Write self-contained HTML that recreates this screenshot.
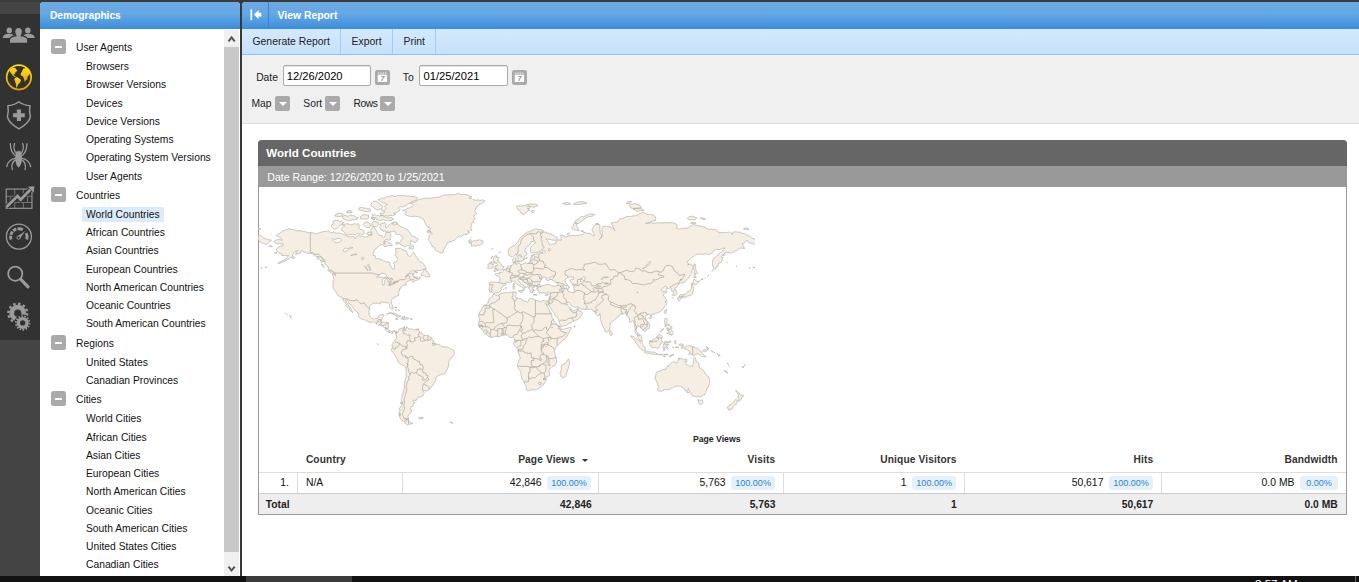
<!DOCTYPE html>
<html lang="en">
<head>
<meta charset="utf-8">
<title>View Report - World Countries</title>
<style>
*{box-sizing:border-box;margin:0;padding:0}
html,body{width:1359px;height:582px;overflow:hidden;background:#444;font-family:"Liberation Sans",Arial,sans-serif;font-size:10px;color:#111}
.abs{position:absolute}
#topbar{position:absolute;left:0;top:0;width:1359px;height:2px;background:#3a3a3a}
#side{position:absolute;left:0;top:0;width:40px;height:576px;background:#444}
#sidedark{position:absolute;left:0;top:14px;width:40px;height:326px;background:#323232}
#gap{position:absolute;left:240px;top:0;width:2px;height:576px;background:#383838}
#taskbar{position:absolute;left:0;top:576px;width:1359px;height:6px;background:#121212;overflow:hidden}
#taskbar .act{position:absolute;left:246px;top:0;width:106px;height:6px;background:#3b3b3b}
#taskbar .clk{position:absolute;left:1255px;top:1px;font-size:11.6px;line-height:13px;color:#fff;white-space:nowrap}
#taskbar .sep{position:absolute;left:1355px;top:0;width:1px;height:6px;background:#666}
/* left panel */
#lp{position:absolute;left:40px;top:2px;width:200px;height:574px;background:#fff;border-radius:4px 4px 0 0;overflow:hidden}
.hdr{position:absolute;left:0;top:0;right:0;height:27px;background:linear-gradient(#69aae5 0%,#66a7e4 45%,#4a97df 80%,#3a8cdb 100%);color:#fff;font-weight:bold;font-size:10.2px;line-height:27px;white-space:nowrap}
#lp .hdr span{position:absolute;left:10px;top:0px}
#tree{position:absolute;left:40px;top:0;width:184px;height:576px;overflow:hidden}
.tp,.tc{position:absolute;white-space:nowrap;font-size:10.3px;line-height:13px;height:13px;color:#111}
.tp{left:36px}
.tc{left:46px}
.mn{position:absolute;left:-25px;top:-1.5px;width:15px;height:15px;border-radius:2.5px;background:#aaa}
.mn:after{content:"";position:absolute;left:4px;top:6.3px;width:7px;height:2.3px;background:#fff;border-radius:.5px}
.sel span{position:absolute;left:-4px;top:-1px;padding:1px 4px 1px 4px;height:15px;line-height:13px;background:#dcebfc;border-radius:2px}
#sb{position:absolute;left:224px;top:30px;width:15px;height:546px;background:#f0f0f0}
#sb .th{position:absolute;left:0;top:17px;width:15px;height:505px;background:#c8c8c8}
/* main panel */
#mp{position:absolute;left:242px;top:2px;width:1117px;height:574px;background:#fff;border-radius:4px 0 0 0;overflow:hidden}
#mpi{position:absolute;left:1px;top:0;width:1116px;height:574px}
#mpi>.hdr,#mpi>#tb,#mpi>#flt{left:-1px;width:1117px}
#mpi>.hdr>*,#mpi>#tb>*,#mpi>#flt>*{margin-left:1px}
#mp .hdr .col{position:absolute;left:0;top:0;width:26px;height:27px;border-right:1px solid #3783d6}
#mp .hdr .t{position:absolute;left:34.5px;top:0px;font-size:10.4px}
#tb{position:absolute;left:0;top:27px;width:1116px;height:26px;background:linear-gradient(#d4e9fc,#c6e1fa);border-bottom:1px solid #8ec3f4;font-size:10.4px;color:#222}
#tb div{position:absolute;top:0;height:25px;line-height:25.2px;border-right:1px solid #9fcdf6;text-align:left;white-space:nowrap}
#flt{position:absolute;left:0;top:53px;width:1116px;height:69px;background:#f0f0f0;border-bottom:1px solid #dcdcdc}
#flt .lb{position:absolute;font-size:10.3px;line-height:13px;color:#222;white-space:nowrap}
.inp{position:absolute;top:10px;width:88px;height:21px;border:1px solid #aaa;border-radius:2px;background:#fff;font-size:11.15px;line-height:21px;padding-left:2.8px;color:#000;box-shadow:inset 0 1px 1px #e4e4e4}
.cal{position:absolute;top:15px;width:15px;height:15px}
.dd{position:absolute;top:41px;width:15px;height:15px;border-radius:2px;background:#aaa}
.dd:after{content:"";position:absolute;left:3.5px;top:5.5px;border:4px solid transparent;border-top:4.5px solid #fff;border-bottom:0}
/* report */
#rep{position:absolute;left:15px;top:138px;width:1089px;height:375px;border:1px solid #999;border-top:0;border-radius:4px 4px 0 0;background:#fff}
#rep .ti{position:absolute;left:-1px;top:0;width:1089px;height:26px;background:#666;border-radius:4px 4px 0 0;color:#fff;font-weight:bold;font-size:11.6px;line-height:26px}
#rep .ti span{position:absolute;left:8.2px;top:0;white-space:nowrap}
#rep .su{position:absolute;left:-1px;top:26px;width:1089px;height:20.5px;background:#999;color:#fff;font-size:10.6px;line-height:20px}
#rep .su span{position:absolute;left:9.3px;top:0.5px;white-space:nowrap}

#tbl{position:absolute;left:0;top:0;width:1087px;height:374px}
#tbl span{position:absolute;white-space:nowrap;line-height:13px;height:13px}
#tbl .ax{font-weight:bold;font-size:8.7px;color:#222;line-height:11px}
#tbl .th{font-weight:bold;font-size:10.2px;color:#333;letter-spacing:0.12px}
#tbl .td{font-size:10.4px;color:#111}
#tbl .tt{font-weight:bold;font-size:10.3px;color:#222}
#tbl .bd{font-size:9.05px;color:#1f87d0;background:#e6f0f9;border-radius:3.5px;height:13.5px;line-height:15.3px;text-align:center;overflow:hidden}
#tbl .hl{position:absolute;left:0;width:1087px;height:1px;background:#ddd}
#tbl .vl{position:absolute;width:1px;height:20px;background:#ddd}
#tbl .tot{position:absolute;left:0;width:1087px;height:21px;background:#eee;border-top:1px solid #ccc}
#tbl .arr{position:absolute;border:3.2px solid transparent;border-top:3.6px solid #333;border-bottom:0}
</style>
</head>
<body>
<div id="side"></div>
<div id="sidedark"></div>
<div id="topbar"></div>
<div id="gap"></div>
<svg class="abs" style="left:0;top:0" width="40" height="340" viewBox="0 0 40 340">
<defs><linearGradient id="gy" x1="0" y1="0" x2="0" y2="1"><stop offset="0" stop-color="#f9dc1e"/><stop offset="0.5" stop-color="#f3c40f"/><stop offset="1" stop-color="#e6a200"/></linearGradient></defs>
<g transform="translate(0,14) scale(0.06873)"><g fill="#9b9b9b">
<ellipse cx="135" cy="240" rx="40" ry="44"/><path d="M40 350 Q42 305 100 292 L165 292 Q200 300 205 320 L150 350 Z"/>
<ellipse cx="405" cy="240" rx="40" ry="44"/><path d="M505 350 Q503 305 445 292 L380 292 Q345 300 340 320 L395 350 Z"/>
<g stroke="#323232" stroke-width="16"><ellipse cx="270" cy="258" rx="56" ry="62"/><path d="M137 428 L137 375 Q145 330 215 318 L325 318 Q395 330 403 375 L403 428 Z"/></g>
<rect x="240" y="290" width="60" height="50"/>
</g></g>
<g transform="translate(0,56) scale(0.06873)"><circle cx="275" cy="310" r="178" fill="none" stroke="url(#gy)" stroke-width="25"/>
<g fill="url(#gy)">
<path d="M140 205 L170 180 L205 168 L228 182 L252 215 L226 236 L218 262 L196 270 L214 290 L238 300 L214 307 L186 286 L160 250 L146 228 Z"/>
<path d="M213 322 L246 304 L286 330 L306 350 L292 386 L266 416 L247 456 L234 462 L232 410 L220 370 L210 342 Z"/>
<path d="M340 182 L380 174 L420 198 L442 240 L424 276 L402 300 L396 340 L376 352 L360 378 L350 340 L336 300 L310 286 L298 262 L320 226 L330 200 Z"/>
</g></g>
<g transform="translate(0,96) scale(0.06873)"><path d="M275 84 Q205 136 114 140 Q130 215 108 300 Q122 392 275 480 Q428 392 442 300 Q420 215 436 140 Q345 136 275 84 Z" fill="none" stroke="#9b9b9b" stroke-width="21" stroke-linejoin="round"/>
<path d="M245 195 H305 V250 H360 V310 H305 V365 H245 V310 H190 V250 H245 Z" fill="#9b9b9b"/></g>
<g transform="translate(0,136) scale(0.06873)"><g fill="none" stroke="#9b9b9b" stroke-width="19" stroke-linecap="round">
<path d="M240 295 Q150 250 150 110"/><path d="M300 295 Q392 250 392 110"/>
<path d="M250 272 Q180 200 212 110"/><path d="M292 272 Q362 200 330 110"/>
<path d="M232 322 Q120 340 98 445"/><path d="M310 322 Q422 340 446 445"/>
<path d="M236 340 Q150 390 180 490"/><path d="M306 340 Q392 390 364 490"/>
</g>
<path d="M238 215 L250 232 L262 208 L270 225 L280 208 L292 232 L304 215 L310 262 Q322 290 318 360 Q312 420 270 462 Q230 420 224 360 Q220 290 232 262 Z" fill="#9b9b9b"/></g>
<g transform="translate(0,176) scale(0.06873)"><g fill="none" stroke="#7a7a7a" stroke-width="14">
<path d="M90 295 H465 M90 385 H465 M215 190 V295 M340 190 V295 M150 295 V385 M280 295 V385 M400 295 V385 M215 385 V470 M340 385 V470"/></g>
<rect x="90" y="190" width="375" height="280" fill="none" stroke="#9b9b9b" stroke-width="16"/>
<path d="M95 450 L255 290 L300 345 L448 192" fill="none" stroke="#323232" stroke-width="70"/>
<path d="M95 450 L255 290 L300 345 L440 200" fill="none" stroke="#9b9b9b" stroke-width="40"/>
<path d="M500 148 L405 158 L490 243 Z" fill="#9b9b9b"/></g>
<g transform="translate(0,216) scale(0.06873)"><circle cx="275" cy="300" r="182" fill="none" stroke="#9b9b9b" stroke-width="19"/>
<path d="M161 342 A120 120 0 0 1 156 288 M159 274 A120 120 0 0 1 183 228 M193 217 A120 120 0 0 1 238 191 M254 187 A120 120 0 0 1 331 199 M381 249 A120 120 0 0 1 389 342" fill="none" stroke="#9b9b9b" stroke-width="42"/>
<path d="M385 200 L250 295 L292 335 Z" fill="#9b9b9b" stroke="#323232" stroke-width="10"/>
<circle cx="270" cy="315" r="24" fill="#323232" stroke="#9b9b9b" stroke-width="14"/></g>
<g transform="translate(0,256) scale(0.06873)"><circle cx="222" cy="258" r="103" fill="none" stroke="#9b9b9b" stroke-width="25"/>
<path d="M300 338 L408 448" fill="none" stroke="#9b9b9b" stroke-width="46" stroke-linecap="round"/></g>
<g transform="translate(0,296) scale(0.06873)"><circle cx="258" cy="250" r="122" fill="#9b9b9b"/><circle cx="258" cy="250" r="137.0" fill="none" stroke="#9b9b9b" stroke-width="34" stroke-dasharray="35.9 35.9"/><circle cx="258" cy="250" r="52" fill="#323232"/><circle cx="330" cy="392" r="124" fill="#323232"/><circle cx="330" cy="392" r="88" fill="#9b9b9b"/><circle cx="330" cy="392" r="99.0" fill="none" stroke="#9b9b9b" stroke-width="26" stroke-dasharray="22.2 22.2"/><circle cx="330" cy="392" r="38" fill="#323232"/></g>
</svg>
<div id="lp">
  <div class="hdr"><span>Demographics</span></div>
</div>
<div id="tree">
<div class="tp" style="top:40.9px"><i class="mn"></i>User Agents</div>
<div class="tc" style="top:59.9px">Browsers</div>
<div class="tc" style="top:77.9px">Browser Versions</div>
<div class="tc" style="top:96.9px">Devices</div>
<div class="tc" style="top:114.9px">Device Versions</div>
<div class="tc" style="top:132.9px">Operating Systems</div>
<div class="tc" style="top:150.9px">Operating System Versions</div>
<div class="tc" style="top:169.9px">User Agents</div>
<div class="tp" style="top:188.9px"><i class="mn"></i>Countries</div>
<div class="tc sel" style="top:207.9px"><span>World Countries</span></div>
<div class="tc" style="top:225.9px">African Countries</div>
<div class="tc" style="top:243.9px">Asian Countries</div>
<div class="tc" style="top:262.9px">European Countries</div>
<div class="tc" style="top:280.9px">North American Countries</div>
<div class="tc" style="top:298.9px">Oceanic Countries</div>
<div class="tc" style="top:316.9px">South American Countries</div>
<div class="tp" style="top:336.9px"><i class="mn"></i>Regions</div>
<div class="tc" style="top:355.9px">United States</div>
<div class="tc" style="top:373.9px">Canadian Provinces</div>
<div class="tp" style="top:392.9px"><i class="mn"></i>Cities</div>
<div class="tc" style="top:411.9px">World Cities</div>
<div class="tc" style="top:430.9px">African Cities</div>
<div class="tc" style="top:448.9px">Asian Cities</div>
<div class="tc" style="top:466.9px">European Cities</div>
<div class="tc" style="top:484.9px">North American Cities</div>
<div class="tc" style="top:503.9px">Oceanic Cities</div>
<div class="tc" style="top:521.9px">South American Cities</div>
<div class="tc" style="top:539.9px">United States Cities</div>
<div class="tc" style="top:557.9px">Canadian Cities</div>

</div>
<div id="sb"><div class="th"></div>
<svg class="abs" style="left:0;top:0" width="15" height="546" viewBox="0 0 15 546"><path d="M4.5 11.3 L7.6 7.4 L10.7 11.3" fill="none" stroke="#505050" stroke-width="1.9"/><path d="M4.5 536.6 L7.6 540.5 L10.7 536.6" fill="none" stroke="#505050" stroke-width="1.9"/></svg>
</div>
<div id="mp"><div id="mpi">
  <div class="hdr"><div class="col"><svg class="abs" style="left:7px;top:7px" width="14" height="13" viewBox="0 0 14 13"><rect x="0.5" y="0.2" width="1.6" height="11" fill="#fff"/><path d="M3.9 5.6 L8.6 1.1 L8.6 3.7 L11.3 3.7 L11.3 7.5 L8.6 7.5 L8.6 10.1 Z" fill="#fff"/></svg></div><span class="t">View Report</span></div>
  <div id="tb">
    <div style="left:0;width:98px;padding-left:9.5px">Generate Report</div>
    <div style="left:98px;width:52px;padding-left:10.5px">Export</div>
    <div style="left:150px;width:43px;padding-left:10.5px">Print</div>
  </div>
  <div id="flt">
    <span class="lb" style="left:13.2px;top:15.5px">Date</span>
    <div class="inp" style="left:40px">12/26/2020</div>
    <div class="cal" style="left:132px"><svg width="15" height="15" viewBox="0 0 15 15"><rect width="15" height="15" rx="2.2" fill="#aaa"/><rect x="2.7" y="4.8" width="9.4" height="7.1" fill="#fff"/><path d="M2.9 3.5H12.1" stroke="#d4d4d4" stroke-width="2.4" stroke-dasharray="1.5 0.8"/><text x="7.5" y="10.7" font-family="Liberation Sans,Arial,sans-serif" font-size="6.6" font-weight="bold" font-style="italic" fill="#8c8c8c" text-anchor="middle">7</text></svg></div>
    <span class="lb" style="left:159.8px;top:15.5px">To</span>
    <div class="inp" style="left:176px;width:89px;padding-left:3.6px">01/25/2021</div>
    <div class="cal" style="left:268.7px"><svg width="15" height="15" viewBox="0 0 15 15"><rect width="15" height="15" rx="2.2" fill="#aaa"/><rect x="2.7" y="4.8" width="9.4" height="7.1" fill="#fff"/><path d="M2.9 3.5H12.1" stroke="#d4d4d4" stroke-width="2.4" stroke-dasharray="1.5 0.8"/><text x="7.5" y="10.7" font-family="Liberation Sans,Arial,sans-serif" font-size="6.6" font-weight="bold" font-style="italic" fill="#8c8c8c" text-anchor="middle">7</text></svg></div>
    <span class="lb" style="left:8.4px;top:41.5px">Map</span><div class="dd" style="left:32px"></div>
    <span class="lb" style="left:60.3px;top:41.5px">Sort</span><div class="dd" style="left:82px"></div>
    <span class="lb" style="left:110.4px;top:41.5px;letter-spacing:-0.45px">Rows</span><div class="dd" style="left:137px"></div>
  </div>
  <div id="rep">
    <div class="ti"><span>World Countries</span></div>
    <div class="su"><span>Date Range: 12/26/2020 to 1/25/2021</span></div>
<svg class="abs" style="left:-1px;top:47px" width="498" height="242" viewBox="258 187 498 242">
<defs><clipPath id="mc"><rect x="258.5" y="187" width="496.5" height="242"/></clipPath></defs>
<g clip-path="url(#mc)" stroke="#aeaba5" stroke-width="0.65" stroke-linejoin="round">
<path fill="#f6eee2" d="M493.5 294.0L494.3 293.9L495.4 294.9L496.4 295.3L497.4 294.8L498.5 295.1L500.1 294.2L501.9 293.4L503.5 293.0L504.7 292.8L505.6 292.5L506.7 292.7L508.3 292.4L509.5 292.6L510.3 292.2L511.7 292.2L513.3 292.2L514.8 291.8L515.5 291.9L515.5 292.7L516.4 292.2L515.9 293.7L516.4 294.6L515.3 296.3L515.1 296.7L516.4 297.6L517.1 297.9L518.5 298.3L519.8 298.3L520.9 298.8L521.8 299.1L522.5 300.4L523.9 301.1L525.2 301.3L526.2 301.4L527.3 302.1L528.6 301.1L528.8 299.4L529.7 298.5L530.7 298.3L531.6 298.7L532.7 298.8L534.0 299.3L535.4 300.0L536.6 300.7L538.1 300.7L539.4 301.2L540.8 301.3L541.7 301.1L542.9 300.5L544.2 300.4L545.6 301.0L546.9 301.0L547.9 300.7L548.1 302.1L548.8 303.3L548.1 305.1L547.9 305.7L547.1 305.0L546.4 304.0L545.7 302.6L545.6 303.3L546.2 305.1L547.3 306.6L548.1 307.5L548.3 308.5L549.2 309.6L549.6 311.0L550.0 312.4L551.1 312.9L551.5 313.8L551.9 315.2L551.6 316.2L551.9 317.2L552.4 318.3L553.7 319.3L554.0 320.8L554.8 322.3L556.0 323.5L556.9 324.3L557.8 325.3L558.3 326.0L559.4 326.5L560.2 327.0L559.9 328.0L561.2 329.3L562.2 329.3L563.2 329.2L564.1 329.0L565.2 328.5L566.6 328.3L567.9 328.3L568.9 327.6L570.4 327.5L571.1 327.6L570.8 329.3L570.1 330.3L569.6 331.3L569.0 332.5L568.6 333.3L567.8 334.7L567.3 336.0L566.8 336.8L565.9 337.7L564.9 338.8L563.9 339.5L562.9 340.2L561.8 341.2L561.0 342.5L559.5 343.2L558.5 344.1L557.9 345.3L556.4 346.6L555.7 347.6L555.5 348.5L554.7 349.8L554.1 351.5L555.1 352.4L554.7 353.4L554.8 354.4L555.3 355.1L555.5 356.4L556.4 357.2L556.3 358.6L556.4 359.7L556.7 360.9L556.6 362.4L556.0 363.5L556.0 364.4L554.8 365.1L554.1 366.0L552.8 366.2L551.7 367.1L550.5 368.0L549.6 369.2L548.6 370.5L549.4 371.5L549.4 372.6L549.6 373.7L549.6 375.1L548.3 376.5L547.2 376.7L546.2 377.2L546.0 378.9L546.1 380.1L545.7 381.3L545.1 382.3L544.2 383.0L543.9 384.1L542.9 385.0L541.8 385.9L540.8 387.2L539.8 387.6L538.8 388.8L537.4 388.9L536.5 389.7L535.1 390.0L534.0 389.8L532.5 389.7L531.3 390.0L530.1 390.1L528.6 390.9L527.0 390.1L526.3 388.9L526.1 387.7L526.2 386.7L525.3 385.8L525.2 384.6L524.4 383.5L524.3 382.4L523.4 381.5L522.9 380.3L522.1 379.3L521.8 378.2L521.4 376.9L521.2 375.4L520.7 374.4L521.0 373.0L520.6 371.5L519.8 370.5L518.9 369.0L518.2 367.8L517.6 366.9L517.5 365.8L517.5 364.7L517.6 363.7L518.4 362.7L518.7 361.1L519.0 360.0L520.1 359.0L520.2 357.2L519.8 356.3L519.4 355.3L518.9 353.8L518.3 352.4L518.0 351.1L518.0 349.8L516.7 348.3L515.8 347.5L515.1 346.6L514.1 344.9L513.7 343.2L514.4 341.9L514.8 340.3L514.7 338.6L513.6 337.3L511.7 337.4L509.9 337.5L509.0 336.4L508.0 335.7L507.3 335.0L506.2 334.8L505.3 334.9L504.0 335.1L503.1 335.3L501.5 335.7L500.3 336.0L499.1 336.8L497.3 336.5L496.0 336.2L494.7 336.4L493.2 337.1L491.3 337.4L490.2 337.2L489.3 336.6L488.1 336.1L487.3 335.0L485.9 334.1L484.6 333.3L483.6 331.9L482.9 330.5L481.6 329.2L480.9 328.4L480.2 327.5L479.1 327.0L478.7 325.7L479.0 324.7L477.8 323.7L478.6 323.1L479.1 322.0L479.0 320.9L479.5 320.0L479.7 319.0L479.7 317.9L479.1 317.2L478.5 316.1L478.4 315.2L479.0 314.3L479.4 313.1L480.1 311.3L481.0 310.5L481.4 309.6L482.0 308.0L483.1 307.0L483.6 305.8L484.7 305.0L485.9 305.0L486.9 304.3L487.9 303.4L488.3 302.0L488.2 300.5L489.0 299.8L489.3 298.6L490.5 297.8L491.3 297.3L492.3 296.6L493.1 295.2ZM655.0 378.4L655.2 377.4L655.5 376.1L656.0 374.6L655.8 373.3L656.4 372.3L657.7 371.7L658.8 371.1L659.9 371.2L660.8 370.8L661.9 370.0L662.9 369.8L664.0 369.3L665.6 369.3L666.2 368.1L667.3 367.1L667.2 365.8L669.0 366.2L669.4 364.7L671.0 363.6L671.7 363.0L672.4 362.0L673.7 361.6L674.7 362.0L675.3 362.8L677.1 362.9L677.4 361.5L678.1 360.9L678.5 359.7L679.8 359.3L681.2 358.4L682.5 358.8L683.5 359.4L684.8 359.3L685.8 359.5L686.9 359.0L687.0 360.1L685.9 360.8L685.2 361.9L685.2 362.8L686.6 364.1L687.5 365.1L688.6 365.4L689.6 366.3L690.7 366.4L692.4 366.4L692.5 365.3L693.2 364.4L693.3 363.1L693.5 361.7L693.6 360.7L693.6 359.7L693.8 358.8L694.3 357.7L695.1 357.5L695.6 358.5L696.1 359.7L696.0 360.8L696.5 362.1L697.6 362.2L698.5 362.9L699.0 363.9L698.8 365.1L699.2 366.9L699.7 368.2L700.7 368.6L701.9 369.3L702.7 369.8L703.5 370.5L704.2 371.8L704.6 373.0L706.0 373.7L706.9 375.4L708.0 376.1L709.0 377.0L709.0 378.3L709.4 379.6L709.5 380.7L709.8 382.0L709.4 383.5L709.0 385.0L708.3 386.1L708.4 387.2L707.3 387.8L706.9 388.6L706.9 390.0L706.0 391.2L705.7 392.6L704.9 393.9L704.8 394.9L703.3 395.0L702.2 395.5L701.5 396.5L700.2 397.2L699.2 396.9L698.1 396.1L696.5 396.9L695.3 396.5L693.8 396.1L692.0 395.7L691.7 394.3L690.8 393.4L690.0 392.1L689.0 391.2L689.0 389.8L688.6 388.5L688.0 389.7L687.3 391.5L686.2 390.7L685.2 390.9L684.9 390.1L684.6 388.9L683.2 387.9L682.0 387.3L681.2 386.7L680.2 386.1L679.1 386.2L677.9 386.1L676.4 386.3L674.8 386.4L673.7 387.2L672.4 387.9L671.0 388.2L669.6 389.5L668.1 389.8L666.9 389.7L665.4 389.9L664.2 389.7L663.1 390.1L662.2 391.2L661.3 391.0L660.2 391.3L659.2 391.0L658.1 390.3L657.4 389.1L658.4 387.5L658.2 386.3L658.1 385.3L657.4 383.6L656.8 381.7L656.0 380.9L655.8 379.8ZM5.7 293.7L4.8 292.8L3.3 291.9L2.4 292.2L1.3 292.2L1.5 291.2L1.4 290.1L0.5 289.7L0.9 288.6L1.3 287.3L1.5 285.8L1.3 284.2L0.7 282.9L1.8 282.6L2.5 281.8L3.9 282.3L5.5 282.0L6.8 282.1L8.2 282.3L9.5 282.5L10.9 282.3L11.0 281.4L11.7 280.4L11.8 278.7L11.7 277.8L10.4 276.4L9.9 275.9L8.8 275.9L7.5 275.1L6.8 274.1L7.9 273.6L9.3 273.4L10.1 273.7L11.3 273.8L11.2 272.1L11.7 272.4L13.6 272.2L14.6 271.9L15.5 271.0L15.5 269.8L16.5 269.3L17.8 268.9L19.0 267.9L19.7 266.3L20.7 265.8L21.6 265.9L22.8 265.4L24.5 265.1L25.0 264.5L25.4 263.8L25.0 262.7L24.6 261.6L24.3 259.8L25.0 258.6L26.5 258.2L27.7 257.5L28.0 258.5L27.4 259.8L28.1 260.1L27.1 260.6L26.6 261.6L26.4 262.7L26.9 263.6L28.3 263.6L28.1 264.5L29.3 263.9L30.3 263.6L31.6 263.4L32.6 264.5L33.9 264.5L35.0 263.8L36.6 263.0L38.2 262.9L38.8 263.6L40.2 263.6L40.5 262.7L41.8 262.0L42.1 260.4L41.8 259.2L42.6 257.9L44.0 257.5L44.8 258.6L46.4 258.4L46.0 257.4L46.4 256.4L45.2 255.4L45.2 254.6L46.3 254.4L47.2 254.0L48.7 253.7L50.1 254.0L51.3 254.0L52.7 253.2L54.3 253.2L53.4 252.5L52.1 252.1L50.2 252.2L48.6 252.3L47.2 252.5L45.7 252.7L44.5 253.2L43.6 252.9L42.5 252.1L42.2 251.0L42.4 250.1L42.3 248.9L42.2 248.0L43.2 246.4L44.4 245.4L45.5 244.4L46.6 243.2L47.8 242.6L46.8 241.8L46.2 241.1L44.6 241.4L43.2 241.5L43.0 242.8L42.4 243.9L41.5 245.1L40.5 245.8L39.2 246.4L38.4 247.4L38.0 248.4L36.9 249.1L36.7 250.5L36.7 251.7L37.5 252.1L38.7 252.7L39.0 253.8L38.4 254.9L37.5 255.4L36.9 256.4L36.0 256.9L35.7 258.0L35.6 259.4L34.8 260.5L33.8 261.1L32.7 261.1L32.6 261.8L31.0 261.8L30.7 260.3L30.1 259.5L29.6 258.3L29.1 256.5L28.4 254.8L27.7 253.8L27.3 255.0L26.2 255.7L25.5 256.4L24.4 256.6L23.0 256.9L22.2 255.9L20.9 255.4L20.9 254.0L20.3 253.1L20.1 251.1L20.1 249.9L20.4 249.1L21.0 248.3L22.2 247.6L23.5 246.5L24.9 246.0L26.0 245.8L26.9 244.9L27.9 244.0L28.7 243.0L29.7 241.9L30.3 240.7L31.0 239.5L31.6 238.5L32.3 237.6L33.4 236.7L34.4 235.6L35.5 234.9L36.4 234.0L37.9 233.3L39.1 232.1L41.1 231.8L42.5 231.2L43.7 230.4L45.2 229.7L46.6 229.3L48.3 229.0L49.6 229.5L51.3 229.3L52.8 229.4L54.0 230.2L55.4 230.9L54.2 231.5L53.3 232.1L54.8 232.1L56.1 232.1L57.7 232.2L58.8 233.0L60.3 233.2L61.3 233.9L62.8 234.0L64.4 235.1L66.2 235.8L67.4 236.8L68.9 237.4L69.0 238.5L69.2 239.6L68.2 240.1L66.9 240.4L65.4 240.2L63.5 240.0L61.8 239.4L60.1 239.4L59.1 238.9L58.1 239.1L59.0 240.5L60.1 241.7L60.7 242.7L60.8 243.9L62.1 244.4L63.5 245.1L64.9 243.9L66.4 243.8L68.0 243.7L67.6 241.7L69.0 240.9L70.3 239.8L71.7 240.1L73.0 240.2L72.8 238.6L73.3 237.4L72.6 236.4L72.3 235.1L74.2 235.3L75.7 235.6L76.4 236.9L77.5 237.1L78.4 236.9L79.8 236.1L81.1 235.8L82.6 235.7L84.5 235.3L85.9 235.1L87.2 235.8L88.4 235.4L90.0 235.3L91.3 234.9L93.2 234.9L94.7 234.4L95.6 233.5L96.1 232.3L97.8 232.7L99.2 233.2L100.8 233.3L102.0 233.4L102.8 234.0L104.2 235.1L105.6 235.2L106.9 234.9L105.5 233.5L104.9 232.1L104.4 230.6L103.8 229.3L104.6 227.9L105.1 226.9L106.2 225.6L107.4 224.8L108.3 223.8L110.0 224.4L111.6 224.8L111.8 226.5L111.6 228.5L111.6 230.2L112.0 231.4L112.1 232.8L113.0 234.5L113.4 236.2L112.8 237.6L112.1 238.9L111.0 240.0L112.0 238.6L113.7 237.4L113.8 235.7L114.4 234.0L114.0 232.2L113.8 231.0L113.7 229.3L114.4 227.6L115.0 226.1L116.9 226.2L118.4 226.8L119.8 226.1L120.8 226.7L121.8 226.8L123.3 227.6L124.6 228.2L125.9 229.3L126.6 230.9L126.2 229.2L125.2 227.3L124.5 226.0L123.7 224.6L122.9 223.1L124.8 222.7L126.2 222.2L128.4 222.1L130.0 221.8L130.4 220.5L131.3 219.2L133.2 218.6L135.1 218.2L136.7 217.4L138.5 216.6L140.5 216.5L142.2 216.3L143.8 216.4L145.6 215.8L147.3 215.7L148.9 215.2L150.2 214.1L151.9 213.7L153.6 212.8L154.8 211.9L155.9 212.6L157.1 213.4L158.4 214.1L159.8 214.6L161.7 214.2L163.1 214.8L164.5 214.6L165.7 215.6L167.2 216.8L167.6 218.6L167.2 220.5L165.7 220.7L163.9 221.1L162.5 221.8L160.6 222.3L158.8 223.3L157.1 223.8L158.5 223.2L160.1 223.0L161.6 223.1L163.2 222.6L164.6 223.2L166.0 223.2L167.2 223.1L168.7 222.8L170.5 222.9L171.8 222.9L173.3 222.8L175.4 223.1L177.2 222.3L178.9 223.0L180.8 222.6L182.6 222.6L184.2 222.7L185.6 223.1L187.2 223.7L188.9 224.6L188.9 226.3L188.3 228.0L189.6 228.2L191.0 229.3L192.2 228.9L193.7 228.0L195.6 228.4L197.2 228.0L199.1 228.3L200.3 227.3L201.8 226.6L202.9 225.6L204.5 224.8L206.4 224.9L207.8 225.2L209.5 225.6L211.3 225.8L213.0 226.4L215.1 226.8L216.7 226.8L217.4 228.3L219.4 228.5L220.8 229.5L222.6 229.1L224.6 229.7L226.2 229.3L227.6 229.8L229.1 230.9L230.3 231.6L230.3 232.6L232.1 232.8L233.7 232.6L235.5 232.5L237.1 232.8L238.4 232.4L239.7 232.3L241.1 231.9L242.6 233.0L244.5 234.0L243.9 234.4L244.3 233.2L245.2 231.9L247.0 231.8L248.4 231.9L250.2 232.1L252.0 232.3L253.8 233.3L255.8 233.6L257.4 234.2L258.6 235.0L260.0 235.5L261.5 236.2L262.8 237.1L263.6 238.1L264.9 238.5L266.5 239.0L268.3 239.6L269.9 239.8L271.4 240.4L270.7 241.3L269.6 241.7L268.5 242.3L267.6 243.5L266.6 244.3L264.8 244.0L263.5 243.5L261.8 242.9L260.1 242.0L259.2 240.9L258.6 240.0L257.5 241.2L256.7 242.2L256.1 243.2L255.4 243.7L254.0 243.5L254.4 244.9L255.4 246.0L255.9 247.4L256.3 248.5L254.7 248.4L253.4 248.0L251.6 248.5L250.0 249.5L248.4 250.5L246.6 251.1L245.2 252.0L244.3 253.1L242.5 253.1L241.4 252.6L239.8 252.5L238.0 252.6L236.4 253.2L235.9 254.4L234.8 255.0L234.0 256.2L233.0 256.9L234.6 257.3L234.4 258.5L234.0 259.8L233.6 261.2L232.6 262.5L231.5 263.1L230.3 263.4L230.3 264.6L230.2 265.8L228.4 266.3L228.0 268.1L226.7 268.6L225.8 269.8L225.3 268.6L225.1 267.0L224.4 265.2L224.3 263.4L224.3 262.2L224.5 260.7L225.1 259.1L226.0 257.9L227.2 257.1L228.0 256.5L228.8 255.6L230.0 254.6L231.4 253.2L232.9 252.3L233.9 251.3L234.9 249.9L236.0 249.0L236.7 248.0L234.8 248.0L233.4 248.8L232.0 249.4L230.7 249.5L228.9 249.7L227.3 249.6L225.8 250.1L225.3 251.6L224.6 252.5L223.5 253.4L222.1 253.7L220.8 254.8L219.3 254.3L218.1 254.0L216.6 253.9L214.7 254.4L213.3 254.4L211.9 254.0L210.6 254.2L209.1 254.5L207.5 254.4L206.6 255.6L205.4 256.5L203.9 257.3L202.7 258.1L201.9 258.9L200.7 259.9L199.7 261.2L199.4 262.9L200.1 263.7L201.1 264.0L200.4 264.5L199.4 265.1L201.0 264.4L202.5 264.0L203.6 265.2L204.9 265.8L204.8 267.5L204.1 268.9L203.9 270.5L203.8 272.3L203.6 273.9L202.1 275.2L201.1 276.8L200.4 278.2L199.2 278.9L198.4 279.7L197.4 281.0L196.7 282.0L195.4 282.7L194.0 283.3L192.3 282.6L190.7 283.7L189.6 285.3L189.2 286.4L188.2 287.5L186.9 287.8L186.2 288.7L187.5 290.0L187.9 291.0L188.7 292.2L188.9 293.7L188.5 294.9L187.6 295.0L186.5 295.5L184.7 296.0L184.7 294.2L185.3 292.4L184.9 291.3L183.1 290.7L183.1 289.7L183.2 288.3L181.9 287.6L180.7 288.5L179.2 288.6L177.8 289.5L178.1 288.2L179.0 286.9L177.4 286.2L176.4 286.6L175.7 287.8L174.2 288.2L173.3 289.0L172.9 290.0L174.4 291.2L175.0 291.9L176.1 291.4L177.0 291.0L178.1 291.1L179.4 291.6L178.4 292.6L177.4 292.8L176.5 293.7L175.6 294.1L175.1 295.2L175.5 296.1L176.5 296.7L177.1 297.5L177.4 298.5L178.5 300.1L178.6 301.3L177.6 301.9L176.7 302.1L178.5 302.7L178.4 303.8L178.2 304.7L177.0 305.7L176.2 306.7L175.8 308.2L174.8 308.9L174.2 309.9L173.3 310.6L172.5 311.3L171.6 312.0L170.1 312.3L168.6 313.1L167.2 313.5L166.4 314.1L165.2 314.2L164.2 314.2L163.2 314.9L162.9 316.1L162.2 314.6L160.5 314.2L159.1 314.8L158.0 315.6L157.4 316.6L156.8 317.7L157.6 318.4L157.8 319.6L158.3 320.7L159.4 321.3L160.2 321.9L160.6 323.1L161.4 324.0L161.5 325.1L161.6 326.3L161.4 327.6L160.9 328.5L159.8 328.8L158.4 329.5L158.0 330.5L157.1 331.4L156.0 331.7L155.4 330.3L155.0 329.5L153.7 329.2L152.9 327.8L151.7 326.7L150.2 326.4L149.6 325.3L148.8 326.4L148.4 328.0L147.9 329.6L148.3 330.9L149.2 332.1L149.8 333.7L151.1 334.2L152.1 335.0L153.0 335.6L153.6 336.6L153.6 337.9L153.7 339.5L154.1 340.6L154.6 341.4L153.6 341.5L152.7 340.8L151.9 340.3L150.7 339.3L149.9 337.9L149.5 336.1L149.2 334.8L148.4 334.0L147.0 332.7L146.6 331.3L147.0 330.3L147.0 329.3L146.7 328.4L146.9 327.4L146.5 326.5L146.4 325.3L146.2 324.3L145.8 323.3L145.6 322.3L145.7 321.3L144.6 320.6L143.5 321.2L142.7 322.3L141.2 322.0L141.2 321.1L141.5 320.0L141.2 318.2L140.1 316.8L139.0 315.9L138.4 314.8L138.0 313.4L136.1 313.1L134.7 314.1L132.9 314.1L131.3 314.6L131.0 315.9L130.5 316.7L128.9 317.2L128.2 318.3L127.2 318.9L126.3 320.2L124.9 320.9L123.4 322.1L122.1 323.1L122.3 324.4L122.0 325.3L122.0 326.7L121.5 328.0L121.5 329.6L120.5 330.9L119.4 331.6L118.4 332.5L117.1 331.3L116.7 330.0L116.2 329.1L115.7 328.0L115.0 327.4L114.8 326.1L114.0 325.4L114.0 324.0L113.4 322.7L112.7 321.8L112.7 320.6L112.0 319.3L112.1 317.9L112.4 317.0L112.1 315.9L111.8 314.5L111.8 313.5L111.2 315.2L109.3 315.6L108.3 314.8L107.3 314.0L106.9 313.3L108.5 312.4L106.6 312.0L105.8 311.5L104.7 310.8L104.1 309.9L103.5 309.1L102.2 309.0L100.8 309.4L99.2 309.2L97.4 309.5L96.7 309.5L95.2 309.3L93.3 309.1L92.0 308.9L91.0 308.8L91.1 307.9L90.4 306.8L88.9 306.9L87.2 307.4L86.0 307.4L85.2 306.8L84.4 306.0L83.2 305.6L82.2 304.1L81.1 302.6L79.6 302.1L78.4 302.7L78.8 303.9L79.1 304.7L79.7 305.6L80.2 306.4L81.3 307.4L81.4 308.2L82.0 309.6L82.5 308.1L83.3 308.9L82.9 310.6L84.5 310.8L85.5 310.6L86.6 310.8L87.2 309.8L88.3 309.2L89.4 308.2L89.8 307.7L89.8 309.6L90.2 310.6L91.6 311.1L92.8 311.6L93.7 312.2L94.4 313.1L93.9 314.6L92.9 315.9L92.1 316.6L91.7 317.9L90.9 318.1L89.7 319.4L88.2 320.0L86.7 320.6L85.7 321.4L84.1 321.7L82.7 322.8L81.1 323.2L80.2 323.5L79.4 324.7L78.1 325.4L76.4 325.5L75.4 325.7L74.4 326.3L73.5 326.7L72.3 326.4L71.9 325.6L71.8 324.7L71.5 323.6L71.1 322.5L71.1 321.4L70.4 320.4L70.0 319.3L69.5 318.2L68.7 317.2L67.3 316.0L66.5 314.5L66.4 313.4L65.5 312.4L64.8 311.5L63.9 310.6L63.5 309.2L62.8 308.2L61.6 306.9L61.1 305.4L60.7 305.1L60.8 303.3L60.7 303.3L60.2 302.2L59.8 300.7L60.1 300.2L60.8 298.5L61.5 296.9L61.9 295.2L62.0 293.9L62.4 292.8L61.5 292.8L60.3 292.5L58.9 293.6L57.9 293.2L56.7 293.0L55.0 292.4L54.6 293.3L52.8 292.7L51.6 292.5L50.5 292.2L50.2 290.9L49.0 290.3L49.7 289.5L49.7 288.6L48.7 288.4L48.9 287.6L50.0 287.0L51.3 286.9L52.7 286.9L52.9 286.1L51.6 286.1L50.4 286.6L48.9 287.2L48.6 286.7L48.6 286.4L47.2 286.2L46.4 286.2L45.7 287.0L46.3 287.5L45.5 287.3L45.1 287.6L44.4 286.9L44.0 287.6L44.5 288.7L44.4 289.3L45.3 290.0L46.0 290.4L45.9 291.2L45.1 290.9L44.5 290.9L44.8 291.8L44.3 291.5L44.7 293.0L43.8 293.1L42.8 292.5L42.2 291.2L42.8 290.4L42.0 290.3L41.4 289.3L40.7 288.3L40.3 287.6L39.6 287.0L39.6 285.5L39.6 284.7L38.4 283.9L37.2 283.1L35.6 282.1L34.0 281.0L33.5 279.7L32.9 279.2L32.2 280.0L31.8 278.9L31.9 278.6L30.2 279.1L30.0 280.4L30.4 281.3L31.8 282.1L32.6 283.9L33.5 284.6L34.9 284.7L35.0 285.5L36.4 286.1L37.7 286.7L38.4 287.5L38.2 288.0L37.6 287.2L36.7 286.9L35.8 287.5L35.8 288.3L36.5 289.2L35.7 290.1L35.2 290.9L34.6 290.7L34.9 289.8L35.2 289.2L34.6 287.6L33.7 287.3L32.7 286.4L31.8 285.8L30.4 285.5L29.9 284.8L28.4 283.9L27.6 282.9L27.3 282.1L27.0 281.3L26.6 281.2L25.4 280.7L24.3 281.5L23.5 281.7L22.7 282.3L21.6 282.8L20.5 282.5L19.6 282.3L18.6 282.1L17.5 282.9L17.5 283.9L17.7 284.7L16.3 285.5L15.2 285.8L14.4 286.4L13.3 287.8L12.9 288.6L13.6 289.5L12.7 290.3L12.3 291.3L10.9 292.2L10.4 292.7L8.6 292.7L7.4 292.7L6.2 293.6ZM493.9 293.7L493.0 292.8L491.5 291.9L490.5 292.2L489.4 292.2L489.7 291.2L489.6 290.1L488.6 289.7L489.1 288.6L489.4 287.3L489.7 285.8L489.4 284.2L488.9 282.9L489.9 282.6L490.7 281.8L492.1 282.3L493.6 282.0L495.0 282.1L496.3 282.3L497.6 282.5L499.1 282.3L499.2 281.4L499.9 280.4L500.0 278.7L499.9 277.8L498.5 276.4L498.1 275.9L497.0 275.9L495.7 275.1L495.0 274.1L496.0 273.6L497.4 273.4L498.2 273.7L499.5 273.8L499.3 272.1L499.9 272.4L501.8 272.2L502.7 271.9L503.7 271.0L503.7 269.8L504.6 269.3L506.0 268.9L507.2 267.9L507.9 266.3L508.8 265.8L509.8 265.9L511.0 265.4L512.6 265.1L513.2 264.5L513.6 263.8L513.2 262.7L512.8 261.6L512.5 259.8L513.2 258.6L514.6 258.2L515.9 257.5L516.1 258.5L515.6 259.8L516.3 260.1L515.2 260.6L514.8 261.6L514.5 262.7L515.1 263.6L516.4 263.6L516.3 264.5L517.4 263.9L518.5 263.6L519.8 263.4L520.8 264.5L522.1 264.5L523.2 263.8L524.8 263.0L526.3 262.9L527.0 263.6L528.3 263.6L528.6 262.7L530.0 262.0L530.3 260.4L530.0 259.2L530.8 257.9L532.1 257.5L533.0 258.6L534.6 258.4L534.2 257.4L534.6 256.4L533.4 255.4L533.4 254.6L534.5 254.4L535.4 254.0L536.9 253.7L538.3 254.0L539.5 254.0L540.8 253.2L542.5 253.2L541.5 252.5L540.3 252.1L538.3 252.2L536.8 252.3L535.3 252.5L533.9 252.7L532.7 253.2L531.8 252.9L530.7 252.1L530.4 251.0L530.5 250.1L530.5 248.9L530.4 248.0L531.3 246.4L532.5 245.4L533.6 244.4L534.7 243.2L535.9 242.6L535.0 241.8L534.3 241.1L532.8 241.4L531.3 241.5L531.1 242.8L530.5 243.9L529.6 245.1L528.6 245.8L527.3 246.4L526.6 247.4L526.1 248.4L525.1 249.1L524.8 250.5L524.8 251.7L525.6 252.1L526.9 252.7L527.1 253.8L526.5 254.9L525.6 255.4L525.0 256.4L524.1 256.9L523.9 258.0L523.7 259.4L522.9 260.5L522.0 261.1L520.9 261.1L520.8 261.8L519.1 261.8L518.9 260.3L518.3 259.5L517.8 258.3L517.2 256.5L516.6 254.8L515.9 253.8L515.5 255.0L514.4 255.7L513.7 256.4L512.6 256.6L511.1 256.9L510.4 255.9L509.1 255.4L509.1 254.0L508.4 253.1L508.3 251.1L508.2 249.9L508.6 249.1L509.1 248.3L510.3 247.6L511.6 246.5L513.0 246.0L514.2 245.8L515.1 244.9L516.1 244.0L516.8 243.0L517.9 241.9L518.5 240.7L519.2 239.5L519.8 238.5L520.5 237.6L521.6 236.7L522.5 235.6L523.7 234.9L524.6 234.0L526.0 233.3L527.3 232.1L529.2 231.8L530.7 231.2L531.9 230.4L533.4 229.7L534.7 229.3L536.5 229.0L537.8 229.5L539.5 229.3L541.0 229.4L542.2 230.2L543.5 230.9L542.3 231.5L541.5 232.1L543.0 232.1L544.2 232.1L545.8 232.2L546.9 233.0L548.5 233.2L549.5 233.9L551.0 234.0L552.6 235.1L554.4 235.8L555.6 236.8L557.1 237.4L557.2 238.5L557.4 239.6L556.3 240.1L555.1 240.4L553.6 240.2L551.7 240.0L550.0 239.4L548.3 239.4L547.3 238.9L546.2 239.1L547.1 240.5L548.3 241.7L548.8 242.7L549.0 243.9L550.3 244.4L551.7 245.1L553.0 243.9L554.5 243.8L556.1 243.7L555.7 241.7L557.2 240.9L558.5 239.8L559.9 240.1L561.2 240.2L560.9 238.6L561.4 237.4L560.7 236.4L560.5 235.1L562.4 235.3L563.9 235.6L564.6 236.9L565.7 237.1L566.6 236.9L568.0 236.1L569.3 235.8L570.7 235.7L572.6 235.3L574.0 235.1L575.4 235.8L576.6 235.4L578.2 235.3L579.5 234.9L581.3 234.9L582.9 234.4L583.7 233.5L584.2 232.3L585.9 232.7L587.4 233.2L589.0 233.3L590.2 233.4L591.0 234.0L592.4 235.1L593.7 235.2L595.1 234.9L593.7 233.5L593.0 232.1L592.5 230.6L591.9 229.3L592.8 227.9L593.3 226.9L594.4 225.6L595.6 224.8L596.4 223.8L598.2 224.4L599.8 224.8L600.0 226.5L599.8 228.5L599.8 230.2L600.2 231.4L600.2 232.8L601.2 234.5L601.6 236.2L601.0 237.6L600.2 238.9L599.1 240.0L600.2 238.6L601.8 237.4L602.0 235.7L602.5 234.0L602.2 232.2L601.9 231.0L601.8 229.3L602.5 227.6L603.2 226.1L605.1 226.2L606.6 226.8L607.9 226.1L609.0 226.7L610.0 226.8L611.4 227.6L612.7 228.2L614.0 229.3L614.7 230.9L614.3 229.2L613.4 227.3L612.7 226.0L611.9 224.6L611.1 223.1L613.0 222.7L614.4 222.2L616.5 222.1L618.1 221.8L618.6 220.5L619.5 219.2L621.4 218.6L623.3 218.2L624.9 217.4L626.7 216.6L628.6 216.5L630.3 216.3L631.9 216.4L633.7 215.8L635.5 215.7L637.1 215.2L638.4 214.1L640.0 213.7L641.8 212.8L642.9 211.9L644.1 212.6L645.3 213.4L646.6 214.1L648.0 214.6L649.8 214.2L651.3 214.8L652.7 214.6L653.9 215.6L655.4 216.8L655.8 218.6L655.4 220.5L653.9 220.7L652.0 221.1L650.7 221.8L648.7 222.3L646.9 223.3L645.2 223.8L646.7 223.2L648.2 223.0L649.8 223.1L651.3 222.6L652.8 223.2L654.2 223.2L655.4 223.1L656.8 222.8L658.6 222.9L659.9 222.9L661.5 222.8L663.5 223.1L665.3 222.3L667.1 223.0L669.0 222.6L670.8 222.6L672.4 222.7L673.7 223.1L675.4 223.7L677.1 224.6L677.1 226.3L676.4 228.0L677.8 228.2L679.1 229.3L680.4 228.9L681.8 228.0L683.7 228.4L685.4 228.0L687.3 228.3L688.5 227.3L689.9 226.6L691.1 225.6L692.7 224.8L694.6 224.9L696.0 225.2L697.7 225.6L699.5 225.8L701.2 226.4L703.2 226.8L704.9 226.8L705.6 228.3L707.5 228.5L709.0 229.5L710.8 229.1L712.8 229.7L714.4 229.3L715.8 229.8L717.2 230.9L718.5 231.6L718.5 232.6L720.3 232.8L721.9 232.6L723.6 232.5L725.2 232.8L726.6 232.4L727.8 232.3L729.3 231.9L730.8 233.0L732.7 234.0L732.0 234.4L732.5 233.2L733.4 231.9L735.2 231.8L736.6 231.9L738.3 232.1L740.2 232.3L741.9 233.3L743.9 233.6L745.6 234.2L746.7 235.0L748.2 235.5L749.6 236.2L750.9 237.1L751.8 238.1L753.0 238.5L754.6 239.0L756.4 239.6L758.1 239.8L759.5 240.4L758.8 241.3L757.8 241.7L756.6 242.3L755.8 243.5L754.8 244.3L753.0 244.0L751.7 243.5L750.0 242.9L748.3 242.0L747.3 240.9L746.8 240.0L745.7 241.2L744.9 242.2L744.3 243.2L743.5 243.7L742.2 243.5L742.6 244.9L743.5 246.0L744.0 247.4L744.5 248.5L742.9 248.4L741.5 248.0L739.8 248.5L738.1 249.5L736.6 250.5L734.7 251.1L733.4 252.0L732.4 253.1L730.7 253.1L729.6 252.6L728.0 252.5L726.2 252.6L724.6 253.2L724.1 254.4L722.9 255.0L722.1 256.2L721.2 256.9L722.8 257.3L722.6 258.5L722.1 259.8L721.7 261.2L720.8 262.5L719.6 263.1L718.5 263.4L718.4 264.6L718.3 265.8L716.6 266.3L716.2 268.1L714.9 268.6L714.0 269.8L713.4 268.6L713.3 267.0L712.6 265.2L712.5 263.4L712.4 262.2L712.6 260.7L713.3 259.1L714.1 257.9L715.3 257.1L716.2 256.5L717.0 255.6L718.2 254.6L719.5 253.2L721.0 252.3L722.1 251.3L723.1 249.9L724.2 249.0L724.8 248.0L722.9 248.0L721.6 248.8L720.2 249.4L718.9 249.5L717.1 249.7L715.5 249.6L714.0 250.1L713.5 251.6L712.8 252.5L711.7 253.4L710.2 253.7L709.0 254.8L707.5 254.3L706.3 254.0L704.7 253.9L702.9 254.4L701.4 254.4L700.0 254.0L698.8 254.2L697.3 254.5L695.7 254.4L694.7 255.6L693.5 256.5L692.0 257.3L690.9 258.1L690.1 258.9L688.9 259.9L687.9 261.2L687.5 262.9L688.3 263.7L689.3 264.0L688.6 264.5L687.5 265.1L689.2 264.4L690.7 264.0L691.7 265.2L693.1 265.8L693.0 267.5L692.3 268.9L692.0 270.5L691.9 272.3L691.7 273.9L690.2 275.2L689.3 276.8L688.6 278.2L687.4 278.9L686.6 279.7L685.6 281.0L684.8 282.0L683.6 282.7L682.1 283.3L680.5 282.6L678.9 283.7L677.8 285.3L677.4 286.4L676.4 287.5L675.1 287.8L674.4 288.7L675.6 290.0L676.0 291.0L676.8 292.2L677.1 293.7L676.7 294.9L675.7 295.0L674.7 295.5L672.9 296.0L672.9 294.2L673.4 292.4L673.0 291.3L671.3 290.7L671.3 289.7L671.4 288.3L670.1 287.6L668.9 288.5L667.3 288.6L666.0 289.5L666.2 288.2L667.2 286.9L665.6 286.2L664.5 286.6L663.8 287.8L662.4 288.2L661.5 289.0L661.1 290.0L662.6 291.2L663.1 291.9L664.3 291.4L665.2 291.0L666.3 291.1L667.6 291.6L666.6 292.6L665.6 292.8L664.6 293.7L663.8 294.1L663.3 295.2L663.6 296.1L664.6 296.7L665.2 297.5L665.6 298.5L666.7 300.1L666.8 301.3L665.8 301.9L664.9 302.1L666.7 302.7L666.5 303.8L666.4 304.7L665.2 305.7L664.4 306.7L663.9 308.2L662.9 308.9L662.3 309.9L661.5 310.6L660.6 311.3L659.7 312.0L658.2 312.3L656.8 313.1L655.4 313.5L654.5 314.1L653.4 314.2L652.4 314.2L651.3 314.9L651.1 316.1L650.4 314.6L648.6 314.2L647.3 314.8L646.2 315.6L645.6 316.6L645.0 317.7L645.8 318.4L645.9 319.6L646.5 320.7L647.5 321.3L648.4 321.9L648.7 323.1L649.6 324.0L649.6 325.1L649.7 326.3L649.6 327.6L649.1 328.5L647.9 328.8L646.6 329.5L646.2 330.5L645.3 331.4L644.2 331.7L643.6 330.3L643.2 329.5L641.8 329.2L641.0 327.8L639.8 326.7L638.3 326.4L637.8 325.3L637.0 326.4L636.6 328.0L636.0 329.6L636.4 330.9L637.4 332.1L637.9 333.7L639.3 334.2L640.2 335.0L641.2 335.6L641.7 336.6L641.7 337.9L641.8 339.5L642.3 340.6L642.8 341.4L641.7 341.5L640.9 340.8L640.1 340.3L638.9 339.3L638.0 337.9L637.6 336.1L637.4 334.8L636.6 334.0L635.2 332.7L634.8 331.3L635.2 330.3L635.2 329.3L634.8 328.4L635.1 327.4L634.7 326.5L634.5 325.3L634.4 324.3L634.0 323.3L633.8 322.3L633.8 321.3L632.8 320.6L631.7 321.2L630.9 322.3L629.4 322.0L629.3 321.1L629.6 320.0L629.4 318.2L628.3 316.8L627.2 315.9L626.5 314.8L626.1 313.4L624.2 313.1L622.9 314.1L621.1 314.1L619.5 314.6L619.2 315.9L618.7 316.7L617.0 317.2L616.4 318.3L615.4 318.9L614.4 320.2L613.1 320.9L611.6 322.1L610.3 323.1L610.4 324.4L610.1 325.3L610.1 326.7L609.7 328.0L609.7 329.6L608.6 330.9L607.5 331.6L606.6 332.5L605.2 331.3L604.8 330.0L604.4 329.1L603.9 328.0L603.2 327.4L602.9 326.1L602.2 325.4L602.1 324.0L601.6 322.7L600.9 321.8L600.9 320.6L600.2 319.3L600.2 317.9L600.6 317.0L600.2 315.9L599.9 314.5L599.9 313.5L599.4 315.2L597.5 315.6L596.5 314.8L595.5 314.0L595.1 313.3L596.7 312.4L594.8 312.0L594.0 311.5L592.9 310.8L592.2 309.9L591.7 309.1L590.3 309.0L589.0 309.4L587.3 309.2L585.6 309.5L584.9 309.5L583.3 309.3L581.5 309.1L580.2 308.9L579.2 308.8L579.3 307.9L578.5 306.8L577.0 306.9L575.4 307.4L574.2 307.4L573.4 306.8L572.6 306.0L571.3 305.6L570.4 304.1L569.3 302.6L567.8 302.1L566.6 302.7L566.9 303.9L567.3 304.7L567.9 305.6L568.4 306.4L569.4 307.4L569.6 308.2L570.1 309.6L570.7 308.1L571.5 308.9L571.1 310.6L572.7 310.8L573.7 310.6L574.7 310.8L575.4 309.8L576.5 309.2L577.6 308.2L578.0 307.7L578.0 309.6L578.4 310.6L579.7 311.1L581.0 311.6L581.9 312.2L582.6 313.1L582.1 314.6L581.1 315.9L580.3 316.6L579.9 317.9L579.1 318.1L577.8 319.4L576.4 320.0L574.9 320.6L573.8 321.4L572.3 321.7L570.9 322.8L569.3 323.2L568.3 323.5L567.5 324.7L566.3 325.4L564.6 325.5L563.6 325.7L562.5 326.3L561.6 326.7L560.5 326.4L560.1 325.6L560.0 324.7L559.7 323.6L559.3 322.5L559.3 321.4L558.6 320.4L558.2 319.3L557.7 318.2L556.8 317.2L555.4 316.0L554.7 314.5L554.6 313.4L553.7 312.4L553.0 311.5L552.1 310.6L551.7 309.2L551.0 308.2L549.8 306.9L549.2 305.4L548.8 305.1L549.0 303.3L548.8 303.3L548.3 302.2L547.9 300.7L548.3 300.2L549.0 298.5L549.6 296.9L550.0 295.2L550.2 293.9L550.6 292.8L549.6 292.8L548.4 292.5L547.1 293.6L546.1 293.2L544.9 293.0L543.1 292.4L542.7 293.3L541.0 292.7L539.7 292.5L538.7 292.2L538.4 290.9L537.2 290.3L537.8 289.5L537.8 288.6L536.9 288.4L537.0 287.6L538.1 287.0L539.4 286.9L540.8 286.9L541.1 286.1L539.7 286.1L538.5 286.6L537.0 287.2L536.8 286.7L536.8 286.4L535.4 286.2L534.6 286.2L533.9 287.0L534.5 287.5L533.6 287.3L533.2 287.6L532.6 286.9L532.1 287.6L532.7 288.7L532.6 289.3L533.5 290.0L534.1 290.4L534.0 291.2L533.2 290.9L532.7 290.9L533.0 291.8L532.4 291.5L532.8 293.0L532.0 293.1L530.9 292.5L530.4 291.2L530.9 290.4L530.1 290.3L529.6 289.3L528.9 288.3L528.5 287.6L527.8 287.0L527.8 285.5L527.8 284.7L526.6 283.9L525.4 283.1L523.7 282.1L522.1 281.0L521.7 279.7L521.0 279.2L520.3 280.0L519.9 278.9L520.1 278.6L518.3 279.1L518.2 280.4L518.6 281.3L519.9 282.1L520.8 283.9L521.7 284.6L523.1 284.7L523.2 285.5L524.6 286.1L525.9 286.7L526.6 287.5L526.3 288.0L525.8 287.2L524.8 286.9L524.0 287.5L524.0 288.3L524.7 289.2L523.9 290.1L523.3 290.9L522.7 290.7L523.1 289.8L523.3 289.2L522.8 287.6L521.8 287.3L520.9 286.4L519.9 285.8L518.6 285.5L518.0 284.8L516.6 283.9L515.7 282.9L515.5 282.1L515.2 281.3L514.8 281.2L513.6 280.7L512.5 281.5L511.7 281.7L510.9 282.3L509.8 282.8L508.7 282.5L507.7 282.3L506.8 282.1L505.7 282.9L505.7 283.9L505.8 284.7L504.5 285.5L503.4 285.8L502.6 286.4L501.5 287.8L501.1 288.6L501.8 289.5L500.8 290.3L500.4 291.3L499.1 292.2L498.5 292.7L496.8 292.7L495.5 292.7L494.3 293.6ZM468.3 241.7L469.2 240.2L471.0 239.6L471.9 240.9L472.6 241.7L474.0 240.4L475.4 241.1L477.1 240.2L478.6 240.3L479.5 239.6L480.2 240.1L481.7 240.4L482.9 240.9L483.1 242.4L482.2 242.9L481.8 244.1L480.9 244.6L479.8 245.1L477.4 245.2L476.0 246.2L474.4 246.1L473.7 245.8L471.9 246.2L470.7 245.4L471.7 244.1L470.8 243.1L469.0 243.0L470.4 243.1L471.7 242.6L470.4 241.5ZM493.8 271.2L494.3 269.9L495.4 269.3L497.3 269.3L497.8 268.6L496.1 268.6L494.3 268.2L495.8 267.4L495.9 266.3L495.1 266.5L495.4 265.6L497.3 265.6L497.4 264.3L496.6 263.4L496.8 262.7L495.7 263.2L494.6 263.1L494.9 261.6L493.9 261.8L493.9 260.1L493.1 259.4L493.6 257.9L494.4 256.4L494.7 255.8L496.1 255.9L497.3 255.8L496.2 257.3L497.5 257.4L498.8 257.5L498.8 258.8L498.0 260.1L497.0 260.7L498.2 260.7L499.1 261.4L499.6 262.4L499.9 263.3L501.2 264.2L501.8 265.2L501.9 266.1L503.8 266.7L503.7 267.9L502.7 268.6L503.4 269.3L501.9 270.0L500.7 270.0L499.7 270.0L498.1 270.3L496.8 270.7L496.5 271.0L494.6 271.4ZM493.1 267.5L491.9 268.2L490.7 268.2L489.2 268.4L488.2 268.8L487.4 267.7L488.6 266.7L487.9 265.4L487.9 264.0L489.8 263.8L489.8 262.5L491.5 262.0L493.2 262.2L494.0 263.4L493.2 264.5L493.2 265.8ZM491.3 258.8L493.0 256.4L492.3 256.4L491.2 257.9ZM499.3 253.1L500.1 252.5L499.9 251.7ZM491.6 249.1L492.7 249.1L492.3 248.2ZM516.7 262.2L518.5 262.0L518.6 260.7L517.1 260.7ZM514.8 262.3L516.1 262.3L515.9 261.4L514.8 261.6ZM526.0 258.8L527.0 258.1L527.3 257.1L526.3 257.7ZM523.7 260.3L524.7 258.3L524.0 259.2ZM531.1 256.5L533.0 256.2L532.0 255.6L531.2 256.0ZM531.5 255.4L532.7 255.4L532.1 254.8ZM516.1 206.7L517.5 207.9L518.1 209.6L519.8 210.4L520.2 211.6L520.5 212.7L521.9 213.0L522.8 214.5L523.9 214.9L524.7 213.3L526.6 212.4L528.2 210.7L530.0 210.4L529.1 209.5L527.3 208.7L529.3 208.5L530.0 207.3L528.6 206.4L527.4 206.7L525.9 205.5L524.9 205.4L523.4 206.0L521.8 205.5L520.6 206.3L518.9 205.8L517.8 205.8ZM526.6 204.6L530.0 206.4L534.0 207.3L538.1 205.5L535.4 204.0L530.0 204.0ZM530.7 211.9L533.4 212.7L534.7 211.3L532.0 210.2ZM562.5 203.4L566.6 204.9L570.7 204.0L567.9 202.4ZM573.4 204.3L578.8 204.6L582.9 203.7L586.9 203.1L582.9 201.5L577.4 202.1ZM571.3 228.0L572.6 229.0L574.0 229.7L575.1 230.1L576.8 230.2L578.4 230.7L579.5 230.2L578.8 229.2L577.4 228.0L577.2 226.9L576.8 225.6L576.8 224.1L577.4 223.6L576.5 222.7L574.7 223.3L573.5 224.2L573.4 225.6L572.7 226.8ZM574.7 223.1L576.3 223.4L578.1 223.6L579.3 222.9L580.8 221.8L582.5 221.0L583.1 220.1L584.2 218.7L585.9 218.0L588.0 216.8L589.6 216.5L591.3 216.7L593.4 215.6L594.8 214.4L593.0 214.3L591.0 213.8L589.1 214.2L587.2 214.9L585.6 215.7L583.7 216.9L581.4 216.2L580.1 217.4L579.2 217.9L578.6 219.6L576.8 220.0L575.2 221.0ZM567.0 234.0L568.6 234.6L569.7 233.5L568.4 232.8ZM580.8 231.2L583.5 232.1L582.9 230.4ZM595.7 223.8L598.5 224.3L597.8 223.1ZM631.0 208.1L637.1 208.7L641.2 207.6L639.8 205.2L634.4 203.4L629.0 205.2ZM633.0 209.0L637.1 211.3L643.9 210.2L641.2 208.4L636.4 208.1ZM626.3 203.7L630.3 203.1L631.7 201.5L627.6 201.8ZM687.3 218.4L690.0 220.0L695.4 219.5L696.8 217.9L692.7 216.3L689.3 216.5ZM700.2 218.1L704.2 219.7L705.6 218.9L702.2 217.9ZM690.7 223.1L694.1 223.8L696.1 223.1L692.7 222.1ZM255.4 229.0L258.1 229.7L260.8 229.3L258.8 228.0L256.1 228.0ZM743.5 229.0L746.3 229.7L749.0 229.3L746.9 228.0L744.2 228.0ZM694.1 263.8L695.1 263.8L695.5 265.1L695.8 266.1L695.4 267.4L695.8 268.8L695.9 270.2L696.4 271.4L696.8 272.2L697.7 273.1L696.7 273.6L695.4 273.4L695.1 274.4L695.1 275.6L696.1 276.9L696.0 278.1L694.9 276.9L694.1 278.1L694.0 276.9L693.9 275.6L694.4 274.2L694.3 273.1L694.2 271.6L694.2 270.5L693.5 269.2L693.6 267.9L694.0 266.9L693.8 265.6ZM691.7 285.3L693.0 284.8L692.7 283.7L694.1 284.1L695.4 284.5L696.8 283.8L698.4 282.6L698.5 281.0L697.6 281.4L696.5 281.0L695.0 280.0L694.1 278.9L693.5 280.5L693.1 282.5L691.7 283.3L691.1 284.0ZM692.6 285.3L693.4 286.9L693.9 288.4L693.5 290.3L692.7 291.2L692.6 293.0L692.3 294.2L691.2 295.4L690.3 295.1L689.3 295.7L687.5 295.8L687.1 296.3L686.3 297.5L685.5 297.5L684.7 296.3L683.5 295.7L681.8 296.3L680.8 296.7L679.0 296.7L679.1 296.0L679.9 295.1L681.3 294.6L682.5 294.5L683.8 294.2L685.0 294.2L685.9 293.7L687.0 292.2L687.7 291.5L689.3 291.6L690.4 290.4L690.5 289.4L691.3 288.4L691.3 286.9L691.7 285.8ZM677.4 298.0L678.1 297.5L679.0 296.9L680.1 297.3L680.4 298.5L680.2 299.8L679.5 300.5L678.7 301.1L678.1 300.7L678.2 298.9L677.5 298.6ZM680.6 297.8L681.7 296.6L683.6 296.3L684.2 297.0L683.5 297.8L682.3 297.6L681.6 298.5ZM700.8 279.7L703.3 278.9L702.2 279.2ZM698.8 281.7L699.7 280.7L699.2 280.7ZM704.9 278.1L705.7 277.4L705.3 277.8ZM707.6 276.4L709.0 274.8L708.3 275.8ZM712.1 271.4L713.2 270.2L712.6 270.7ZM726.3 262.0L727.0 262.9L726.6 262.2ZM723.2 255.0L724.2 255.8L724.6 254.6ZM264.9 267.7L266.9 267.4L265.6 267.4ZM753.0 267.7L755.1 267.4L753.7 267.4ZM260.8 268.2L262.2 268.2L261.5 267.9ZM749.0 268.2L750.3 268.2L749.6 267.9ZM736.1 266.5L737.0 266.5L736.5 266.1ZM672.6 297.8L673.6 297.8L673.2 297.5ZM665.6 309.6L666.8 309.6L666.3 311.7L665.3 313.8L664.4 312.4L664.6 311.0ZM648.9 317.7L650.3 316.6L652.0 316.8L651.3 318.3L650.0 319.0ZM665.0 318.6L666.2 318.4L667.2 318.6L667.2 319.8L667.5 320.6L666.4 322.0L666.7 323.6L668.0 324.4L669.6 324.8L669.4 326.0L667.9 324.9L666.3 325.1L665.0 324.3L664.4 322.7L664.6 321.2L664.6 320.0ZM664.8 325.5L666.3 325.7L665.8 327.0L665.3 326.5ZM660.4 332.1L661.8 331.1L663.5 328.9L663.3 328.4L662.2 330.0L660.8 331.3ZM666.9 327.6L668.3 328.0L667.7 329.3L666.8 329.3ZM667.6 330.0L669.0 328.9L668.7 331.1L667.7 330.8ZM668.8 330.7L669.6 328.7L669.2 330.0ZM670.1 326.7L671.7 326.7L671.9 328.4L671.0 329.6L670.6 328.7L670.3 327.6ZM666.9 334.0L667.7 332.8L668.7 332.0L670.3 332.1L671.2 331.3L671.7 330.4L672.8 331.6L673.1 332.7L673.0 334.0L672.4 334.9L671.5 335.6L671.3 334.2L669.6 334.6L669.4 333.3L667.6 333.5L667.1 334.1ZM649.3 341.2L650.3 340.6L652.0 341.2L652.6 339.9L653.8 339.2L654.7 338.9L655.5 338.3L656.1 337.3L657.3 336.9L658.1 336.0L658.8 334.6L659.7 334.1L661.1 335.3L662.0 335.6L662.9 336.4L661.5 337.5L661.1 338.9L661.5 340.6L662.9 341.9L661.2 342.3L661.1 343.3L660.8 344.3L659.5 345.2L659.4 346.6L658.8 347.8L657.7 347.9L656.9 348.6L655.9 347.8L654.7 347.4L653.1 347.8L652.2 347.1L650.9 346.9L650.7 345.2L649.3 343.9L649.3 342.5ZM630.7 335.8L632.3 336.3L633.7 336.4L634.8 337.7L635.9 338.6L637.1 339.5L638.5 340.3L640.0 341.4L641.2 342.4L642.3 343.6L642.8 344.4L643.2 345.6L644.3 346.1L645.2 347.1L645.3 348.9L645.0 350.8L643.3 350.6L641.7 349.8L640.2 348.5L639.2 347.7L638.5 346.8L637.8 345.8L637.5 344.3L636.4 343.6L635.7 342.5L635.1 340.8L634.0 339.9L633.3 339.0L632.7 338.2L631.7 337.7L630.6 336.2ZM644.2 352.2L645.4 351.0L647.3 351.4L648.9 352.0L650.2 351.8L651.3 352.2L652.0 351.6L653.2 352.1L654.2 352.3L655.4 352.6L656.6 353.3L656.8 354.7L655.7 354.3L654.7 354.3L653.3 354.4L652.0 354.1L650.5 353.8L649.3 353.3L648.4 353.7L647.3 353.3L645.6 352.9ZM656.8 354.0L658.4 354.1L657.7 354.8ZM658.8 354.1L659.7 354.3L659.3 354.9ZM659.9 354.4L661.9 354.1L662.9 354.4L662.2 354.9L660.2 355.1ZM663.9 354.3L666.3 354.4L668.3 354.1L668.0 354.7L664.9 354.9ZM662.9 355.7L664.6 355.9L665.3 356.7L663.5 356.3ZM669.0 356.8L670.3 355.5L672.1 354.5L674.0 354.3L673.0 355.1L672.2 355.7L671.0 356.1L669.6 356.8ZM663.9 342.1L665.3 341.5L666.9 341.9L668.3 341.9L669.8 341.2L671.0 341.1L670.3 342.5L668.6 342.8L666.9 342.5L665.8 343.0L664.9 342.7L664.5 344.3L666.3 344.5L667.5 344.1L668.7 344.3L668.0 345.2L666.5 345.7L667.0 346.8L667.6 347.5L668.3 348.7L667.6 349.5L666.5 348.7L665.9 347.7L665.6 346.9L664.8 347.4L664.4 348.8L664.8 350.4L663.5 350.4L663.6 348.9L663.5 347.8L662.6 346.9L663.1 346.0L663.3 344.9L663.9 343.5ZM674.4 341.9L675.1 340.3L676.0 341.6L675.3 342.5L675.9 343.6L674.8 343.6L674.9 342.7ZM672.4 347.4L674.0 347.4L673.4 348.2ZM675.1 347.1L677.1 346.9L678.9 347.5L677.1 347.8ZM679.1 344.3L680.0 344.2L681.2 343.7L682.3 344.1L683.2 344.3L683.1 345.4L683.5 346.5L684.6 347.5L685.6 346.9L686.6 346.1L687.5 345.8L688.6 345.3L690.0 345.9L691.3 346.2L692.7 346.6L694.1 347.0L695.4 347.7L696.3 348.2L697.4 348.3L698.2 349.5L699.2 349.8L699.7 350.5L700.8 351.0L701.9 352.0L701.1 352.4L702.2 353.7L703.4 354.4L704.2 355.7L705.2 356.2L706.0 356.8L704.2 356.9L703.0 356.4L701.8 356.5L701.0 355.6L700.2 354.9L698.9 354.5L698.1 353.5L697.2 354.0L696.1 354.0L694.7 355.3L693.6 355.7L692.7 355.2L692.0 354.3L690.7 353.9L689.8 354.0L688.6 354.3L689.7 352.7L689.3 351.1L688.0 350.0L686.7 349.7L685.2 349.0L683.9 348.3L682.5 348.2L681.6 348.5L681.6 346.9L682.9 346.1L681.9 345.6L680.5 345.8L679.1 345.0ZM702.6 350.6L703.6 350.1L704.9 349.8L705.8 349.4L706.9 348.7L708.0 348.9L707.6 350.2L706.6 350.7L705.6 351.4L704.6 351.7L703.5 351.4ZM706.0 346.6L707.6 347.4L709.0 349.1L708.4 348.6L706.9 347.3ZM711.1 350.3L712.4 351.1L712.9 352.2L712.0 351.8ZM713.7 352.0L715.1 352.8L714.4 352.8ZM717.9 355.5L719.5 356.1L718.5 356.1ZM719.3 354.3L720.1 355.6L719.5 355.1ZM716.4 353.2L718.2 354.3L717.4 354.1ZM727.4 363.1L728.2 363.7L727.7 363.9ZM728.2 364.4L729.0 365.1L728.5 365.1ZM729.6 366.6L730.0 366.8L729.6 366.8ZM723.9 370.0L725.9 371.2L728.0 373.0L726.6 372.6L724.6 370.9ZM741.9 366.7L743.7 366.6L743.5 367.4L742.1 367.3ZM744.0 365.2L745.6 364.8L744.9 365.5ZM609.7 330.4L610.4 330.7L611.7 332.0L612.4 333.6L612.0 334.8L610.7 335.4L610.0 334.9L609.7 333.3L609.8 332.0ZM573.9 326.5L575.4 326.5L574.7 327.0ZM545.3 295.2L546.2 295.8L547.6 295.2L548.4 294.2L546.9 294.8L546.0 294.9ZM533.4 294.5L534.7 294.6L537.2 294.9L536.1 295.2L534.0 295.1L533.4 294.9ZM539.1 293.6L539.7 293.1L539.5 293.7ZM533.0 289.3L534.7 290.6L534.2 290.0ZM536.6 288.9L537.4 288.7L537.2 289.2ZM518.5 290.7L519.7 290.4L520.9 290.3L522.5 290.4L522.1 291.9L521.8 292.7L520.5 292.2L519.8 291.7L518.6 291.3ZM512.6 286.2L514.0 285.8L514.8 286.9L514.8 287.8L514.5 288.9L513.6 289.3L512.9 288.7L513.0 287.2ZM513.2 283.9L514.2 282.9L514.4 284.5L514.0 285.5L513.3 285.0ZM504.8 288.3L505.7 287.8L506.1 288.3L505.6 288.7ZM503.1 289.3L503.7 289.0L503.5 289.5ZM506.7 287.6L507.3 287.8L506.9 287.8ZM568.4 359.0L568.7 360.2L569.3 361.1L569.6 362.4L570.0 363.7L569.0 364.4L568.9 365.6L568.6 366.4L568.4 368.0L567.7 369.8L567.4 371.1L566.9 372.4L566.3 373.7L566.2 375.1L565.5 376.5L564.4 377.2L563.2 377.6L561.4 376.8L560.8 376.0L560.5 374.7L560.1 373.5L560.2 372.3L560.9 370.9L561.7 369.8L561.7 368.8L561.2 367.8L561.2 366.1L561.8 364.8L562.9 364.6L563.9 364.0L564.9 363.6L565.9 362.8L566.6 361.2L567.7 359.7ZM697.7 399.8L699.2 400.0L700.2 400.5L701.3 399.9L702.5 400.0L702.6 401.9L702.6 402.8L701.9 403.8L700.6 404.4L699.5 404.1L698.5 402.4L698.6 401.1ZM686.7 392.2L688.0 392.1L688.6 392.5L687.3 392.7ZM678.1 358.3L679.4 358.1L679.7 358.6L678.5 358.8ZM686.5 361.5L687.1 361.5L687.0 362.1ZM735.7 390.3L736.8 391.2L737.7 391.8L738.1 392.7L739.5 393.4L739.9 394.9L741.5 395.5L742.4 395.3L743.5 395.2L743.1 396.2L742.7 397.2L741.5 398.0L741.2 399.5L740.2 400.4L739.2 401.3L738.4 400.8L739.1 399.1L737.4 398.0L738.3 396.9L738.5 395.4L737.9 393.6L737.1 392.9L736.5 391.9ZM735.7 399.5L737.2 400.3L737.9 401.4L736.9 402.0L736.4 403.5L735.7 404.7L734.8 404.9L733.8 405.6L733.1 406.4L733.0 408.0L731.9 408.4L731.3 409.3L729.7 409.3L728.4 408.5L727.3 408.3L728.0 406.7L728.6 405.8L729.7 405.1L730.9 404.5L732.0 403.5L732.7 402.6L733.8 401.9L734.6 400.9L734.7 400.0ZM728.6 409.8L729.6 409.8L729.0 410.5ZM289.3 228.5L290.9 229.3L292.7 229.5L294.3 229.8L296.1 230.4L297.3 230.9L298.7 230.6L300.1 230.7L301.6 230.9L303.3 231.5L304.9 231.6L306.7 232.2L308.5 232.6L310.3 232.6L311.8 232.6L313.0 232.8L314.2 233.4L315.7 234.2L316.6 233.5L317.8 233.5L318.7 232.8L319.8 232.6L321.0 232.1L322.7 231.8L323.9 231.6L324.9 231.4L325.9 231.6L327.0 231.3L327.9 230.4L329.3 231.6L330.8 232.5L332.0 233.0L333.4 231.6L334.7 233.0L336.3 232.9L337.3 233.4L338.8 233.0L340.4 233.2L341.4 233.5L342.8 234.2L344.7 234.7L346.2 235.8L347.3 236.2L348.3 236.9L349.8 236.6L350.8 236.9L352.3 236.5L353.7 236.7L354.6 237.4L355.3 238.9L355.7 237.8L356.4 236.7L357.5 236.0L358.4 235.3L360.1 236.1L361.8 236.0L363.2 236.7L364.6 237.1L366.0 236.9L367.3 236.7L368.2 236.1L369.3 235.1L370.2 235.3L371.3 235.8L371.6 234.6L372.0 233.3L371.5 232.3L370.9 231.2L370.7 229.8L371.3 228.5L372.5 228.0L373.4 226.8L374.8 227.9L375.4 229.3L376.1 230.4L376.7 231.6L377.4 232.8L378.4 234.0L378.8 235.1L380.6 235.6L382.2 235.6L382.6 236.6L383.5 237.6L384.9 236.7L385.1 235.5L385.6 234.0L386.2 232.1L387.9 232.3L389.6 232.1L390.2 233.1L391.0 234.0L390.7 235.1L391.0 236.2L390.0 237.3L389.6 238.5L391.0 239.4L389.8 240.1L388.3 240.2L387.1 239.6L385.6 239.6L384.2 240.7L384.1 241.8L384.9 242.8L384.0 243.7L382.9 244.3L381.8 244.6L380.8 244.9L379.7 245.2L378.8 246.0L377.5 247.5L376.1 248.5L374.9 249.4L374.0 251.1L373.8 252.1L373.0 253.1L373.3 254.4L373.1 255.4L374.4 255.5L375.4 255.8L375.4 257.3L376.1 258.8L377.9 258.4L379.5 258.8L380.8 259.6L382.2 259.9L383.2 260.8L385.1 261.3L386.2 262.0L388.1 261.8L389.6 262.2L389.9 263.9L390.0 265.2L390.8 266.3L391.7 267.5L392.3 269.1L393.3 269.3L394.4 268.8L394.6 267.0L394.5 265.7L394.4 264.3L393.4 263.1L394.7 262.3L396.4 261.6L396.8 260.8L397.6 259.8L397.5 258.5L397.5 257.5L396.1 256.8L395.1 255.6L395.5 254.0L396.4 253.1L395.7 251.6L395.7 250.1L395.7 248.2L397.2 248.4L399.1 248.5L400.4 248.4L401.8 249.1L403.0 250.0L404.5 250.7L405.8 250.6L406.6 251.1L406.8 252.3L407.3 253.1L407.3 255.0L408.6 255.5L409.3 256.5L410.5 255.9L411.3 255.4L412.2 254.4L412.7 253.4L413.8 252.3L414.4 253.6L415.4 255.0L416.3 256.4L417.4 257.9L418.2 259.1L418.8 260.7L419.3 261.3L420.1 262.2L421.5 262.3L422.9 263.3L423.7 264.2L424.2 265.1L424.7 266.1L425.8 267.0L425.6 268.4L424.2 269.3L422.9 269.3L421.4 270.1L420.1 270.9L418.9 270.4L417.4 270.9L415.8 270.9L414.0 270.9L412.5 270.8L411.3 271.0L410.0 272.4L409.3 273.3L407.9 273.9L407.1 275.1L405.9 275.9L405.0 276.8L406.6 276.1L407.6 275.1L408.6 274.3L410.0 273.5L411.3 272.9L412.5 273.3L414.0 273.1L414.3 274.1L413.3 274.2L412.0 274.8L413.4 275.4L413.6 276.8L414.7 278.1L415.6 278.4L416.8 278.6L417.9 278.3L418.8 278.7L419.4 277.6L419.7 276.6L420.3 278.1L418.8 279.2L417.3 280.0L416.1 280.4L414.2 281.4L412.7 282.1L411.7 281.0L412.6 280.2L413.6 279.4L412.0 279.4L410.4 280.0L409.1 280.7L407.9 281.3L406.3 282.0L405.6 283.4L405.9 284.8L406.6 285.0L404.8 285.3L403.5 285.2L402.5 285.9L401.2 286.7L401.0 288.1L400.1 289.2L399.1 288.7L399.7 290.1L399.4 291.1L398.6 292.1L398.0 292.4L398.7 293.7L399.1 294.9L397.6 295.7L396.5 296.2L395.9 296.9L394.7 297.1L394.1 297.9L392.8 298.4L391.9 299.5L391.6 300.5L391.1 301.5L391.4 303.3L392.2 304.8L392.6 306.0L393.0 307.1L393.0 308.3L392.6 309.1L391.8 309.5L390.7 308.4L390.0 307.2L389.4 306.0L389.4 304.1L388.3 302.8L387.2 302.6L385.8 303.0L384.2 302.0L383.2 302.4L382.2 302.1L380.3 302.3L380.5 303.7L378.8 303.7L377.0 303.1L375.5 303.4L374.3 303.0L373.0 303.6L372.0 304.1L371.1 304.8L370.2 305.6L369.6 306.4L369.7 308.4L369.7 309.6L369.0 310.3L368.9 311.8L368.9 313.1L369.2 314.2L369.6 315.5L370.2 316.3L370.8 317.5L371.6 318.3L373.4 319.0L374.3 319.2L375.4 318.6L377.0 318.3L378.4 317.5L378.8 316.7L378.9 315.5L379.7 315.3L380.8 314.8L382.0 314.5L383.3 314.5L383.8 315.3L383.7 316.3L382.9 317.1L382.4 318.9L381.8 319.4L381.9 320.9L381.0 322.1L382.4 322.3L383.5 322.1L384.9 322.1L385.9 322.3L386.9 322.3L388.0 322.6L388.7 323.3L388.6 324.3L388.1 325.3L388.4 326.4L388.3 327.4L387.9 328.7L388.5 329.7L389.9 330.9L391.4 331.6L393.0 331.1L393.7 330.5L395.1 330.8L396.5 331.7L396.5 332.9L395.9 333.7L395.2 332.7L395.5 332.1L394.4 331.5L393.3 331.5L392.6 332.3L393.0 333.3L391.8 333.7L390.7 333.1L389.9 332.3L389.1 332.5L388.0 331.9L386.6 330.5L386.1 330.4L385.2 329.7L385.3 328.5L383.9 327.1L382.7 326.0L381.5 325.7L380.3 325.4L379.5 325.1L378.2 324.9L377.4 324.7L376.3 323.9L375.3 322.9L374.2 322.0L373.0 321.6L371.3 322.4L370.2 322.2L369.3 322.1L368.0 321.8L367.3 321.2L365.9 320.6L364.8 319.8L363.5 319.6L362.1 319.3L361.2 318.9L359.8 317.7L358.4 316.6L358.4 315.7L358.7 314.5L358.0 312.8L357.1 312.0L356.1 311.1L355.3 310.2L354.4 309.8L353.7 308.9L353.0 307.3L352.5 306.1L351.5 305.7L350.8 304.7L349.4 304.0L348.5 302.3L348.0 300.8L347.0 300.1L345.8 300.0L345.8 301.1L346.6 302.6L347.3 303.4L348.0 304.3L348.7 305.7L349.9 307.1L350.6 308.5L351.4 310.2L352.1 310.8L353.0 311.9L352.3 312.6L351.3 311.3L350.3 311.0L349.5 309.9L349.4 308.2L348.7 307.6L347.6 307.1L346.2 306.4L345.6 305.7L346.6 304.7L345.6 303.3L344.5 302.0L343.7 301.3L343.4 300.1L342.7 298.9L342.4 297.9L340.9 297.0L339.9 296.4L338.0 295.8L337.8 294.8L337.1 294.1L336.3 293.3L336.1 292.4L335.4 291.2L334.7 290.3L333.9 289.6L333.6 288.6L332.8 287.0L333.2 285.3L333.1 284.4L332.8 283.3L333.2 281.3L333.8 279.7L333.5 277.8L333.2 276.4L332.5 275.4L332.4 274.1L333.7 274.0L334.7 274.4L335.5 275.8L335.6 274.3L335.1 273.2L334.4 272.6L333.6 271.8L332.7 271.4L331.6 271.0L330.6 270.0L329.6 269.6L328.6 268.8L328.2 267.4L327.7 266.1L326.6 265.2L325.6 264.6L324.8 263.8L325.1 262.0L324.1 261.5L322.8 261.4L323.0 260.4L322.5 259.2L321.6 258.1L320.3 256.9L318.4 256.5L317.6 256.7L316.4 256.5L315.3 256.2L314.6 255.4L313.4 254.5L312.2 253.6L310.9 253.2L309.6 253.1L308.1 253.4L306.4 253.1L305.3 252.3L304.2 252.3L302.8 251.1L301.9 251.0L300.8 251.3L300.4 253.1L298.5 253.6L297.1 253.8L295.7 254.6L296.0 253.1L296.3 252.1L297.3 251.5L298.2 250.7L297.3 250.6L296.1 251.1L294.9 251.8L294.3 252.7L293.4 253.5L292.9 254.4L292.4 256.2L291.7 257.2L290.6 257.5L289.8 258.3L288.9 258.8L287.7 259.2L286.6 260.3L285.1 261.1L283.9 261.8L282.4 262.1L281.1 262.7L279.8 263.2L278.0 263.6L277.9 263.1L279.4 262.2L280.7 261.4L282.1 260.6L283.6 260.5L284.9 259.5L286.2 258.8L287.2 257.8L287.9 256.4L288.5 255.4L286.6 255.6L285.1 255.7L284.0 255.6L283.0 255.3L281.8 255.8L282.1 254.0L280.8 253.6L279.8 253.4L278.7 252.9L277.8 251.9L277.1 251.1L276.4 249.9L276.8 248.6L277.8 247.8L279.1 246.6L280.8 246.0L282.9 246.0L282.9 244.9L283.5 243.7L282.3 243.7L281.1 243.9L279.8 243.6L278.4 243.9L277.2 243.7L275.9 243.2L274.8 242.5L273.7 241.5L274.8 240.7L275.7 240.2L277.4 239.6L279.1 239.6L280.6 239.8L282.1 240.4L281.7 239.6L281.4 238.5L280.2 237.5L279.1 236.9L277.4 236.1L276.0 235.3L276.9 234.9L277.8 234.2L279.1 233.4L280.5 232.8L281.5 231.7L282.5 230.9L284.1 230.6L285.9 229.7L287.4 229.3ZM402.5 210.4L404.7 210.1L406.3 209.6L407.5 208.1L409.3 208.1L410.4 207.2L412.2 206.7L413.4 205.2L412.5 203.7L410.6 203.4L412.6 202.6L413.9 202.4L415.6 201.5L417.4 200.3L418.7 199.6L420.6 199.5L422.4 198.4L424.2 198.4L426.1 198.1L428.2 198.1L430.3 198.6L431.9 198.0L433.7 197.7L435.3 197.5L436.9 197.4L438.9 197.2L440.5 196.1L442.4 196.1L443.7 194.8L445.2 195.0L447.3 194.8L449.1 195.0L450.7 194.7L453.0 194.9L455.1 194.5L456.8 193.8L458.6 193.3L460.2 194.4L461.4 194.6L463.6 194.5L464.9 194.5L466.6 194.5L468.3 195.4L469.8 196.3L471.7 196.4L470.0 197.4L469.0 198.4L470.6 198.1L472.1 198.7L473.0 199.6L474.4 199.9L476.0 200.4L478.2 199.8L479.7 200.4L481.2 200.3L482.4 199.7L484.2 201.0L485.2 200.6L484.4 201.7L482.9 202.5L481.8 203.7L480.3 204.4L479.1 204.4L477.8 205.8L477.1 207.2L475.7 208.1L475.6 210.0L474.4 211.0L475.9 212.3L476.4 213.8L475.1 215.1L473.7 215.7L474.2 217.1L475.1 218.4L473.9 219.5L473.0 220.3L473.1 221.4L474.4 221.8L472.6 222.6L471.7 223.6L471.6 225.1L471.0 226.1L471.4 227.1L470.3 228.0L471.4 228.9L471.9 230.4L470.7 229.8L469.0 231.5L467.6 230.9L468.7 231.8L469.6 232.6L468.7 233.2L466.8 233.9L466.2 234.9L464.9 234.4L463.1 235.1L462.2 235.8L460.8 236.7L459.6 236.2L458.1 236.5L456.8 238.1L455.4 239.1L454.2 240.5L452.7 240.9L451.3 241.8L450.0 241.5L449.0 242.1L447.3 242.8L447.0 243.8L446.6 244.9L445.8 246.3L445.2 247.0L445.2 248.1L443.9 249.1L443.0 250.1L443.6 251.1L442.8 252.9L442.0 253.4L441.2 253.0L440.1 252.7L438.8 252.0L438.4 251.5L437.2 251.0L436.4 251.1L435.2 250.2L434.8 249.3L434.7 247.8L433.3 247.0L431.9 246.4L431.7 244.9L430.8 244.0L430.7 242.4L430.0 241.7L429.0 240.7L428.1 239.4L428.7 238.5L429.1 237.6L429.2 235.8L430.6 234.4L432.3 234.0L431.9 233.2L431.0 231.9L429.7 231.0L427.6 230.4L429.4 229.9L431.0 228.8L429.9 227.5L428.0 227.4L426.9 226.8L426.3 225.4L425.8 224.3L425.0 222.8L424.2 221.3L423.7 219.4L422.2 218.4L420.1 217.6L418.8 216.5L417.6 216.5L415.8 216.2L414.7 216.3L413.1 216.6L412.1 216.2L410.6 216.5L409.1 216.2L407.3 215.5L405.6 215.1L405.2 213.8L405.8 212.4L406.6 212.1L405.7 211.1L403.8 210.5ZM427.2 232.6L429.6 233.3L431.0 232.1L429.0 230.9L427.1 231.2ZM392.3 222.6L394.1 221.9L395.5 222.2L397.1 222.8L397.7 224.2L398.4 224.8L399.8 225.9L401.2 227.1L403.1 227.1L404.5 228.5L406.6 229.3L407.9 230.2L409.0 231.7L410.0 232.8L410.4 233.7L410.9 235.1L412.2 236.3L413.2 236.0L414.7 236.9L416.4 237.9L418.1 238.9L417.4 240.7L416.0 241.5L415.4 242.8L414.3 242.2L413.4 241.7L412.2 241.3L410.6 240.2L410.9 242.0L410.0 242.8L410.6 244.2L411.8 245.4L413.4 246.0L413.6 247.8L412.5 249.1L411.3 249.1L409.7 248.3L408.6 248.0L409.8 247.7L411.3 246.6L409.6 245.8L408.2 245.6L406.5 245.8L405.2 247.2L404.1 246.4L403.2 245.8L401.3 245.2L400.5 244.1L399.5 243.7L397.9 244.1L396.4 244.3L395.7 242.8L397.5 242.0L399.5 242.8L401.2 241.7L400.9 240.5L401.8 239.6L403.1 238.4L403.2 237.4L402.3 236.4L400.5 235.6L399.3 234.4L397.8 234.6L396.2 234.2L395.1 232.3L394.4 230.7L392.7 231.8L391.0 231.6L389.4 232.3L388.3 232.4L386.9 231.9L386.2 231.6L384.9 230.9L383.0 231.3L382.6 229.6L380.8 230.0L380.3 228.1L379.5 227.3L380.5 225.7L380.1 224.3L381.8 223.4L383.6 222.9L384.9 222.3L385.4 223.7L386.2 224.3L385.4 225.9L385.6 227.8L387.1 227.1L388.7 224.9L390.3 224.3L391.3 223.2ZM342.8 231.2L341.7 230.0L341.5 228.5L342.3 227.6L343.7 226.9L344.9 226.1L343.2 225.5L341.5 224.8L343.0 224.1L345.0 224.3L346.9 223.6L348.9 224.2L350.8 224.9L352.3 224.6L353.4 223.9L355.1 223.8L356.8 224.2L358.4 223.8L359.3 225.4L359.1 226.8L359.0 228.5L359.8 229.3L361.2 229.6L363.2 230.3L363.9 231.6L364.5 233.3L363.2 234.3L361.8 234.4L360.4 234.1L358.9 233.9L357.8 233.7L356.5 233.8L355.2 234.9L353.7 234.6L352.1 234.1L350.0 234.7L348.3 235.1L346.5 234.8L344.9 233.3L344.1 232.0L342.8 231.2ZM331.3 226.8L332.8 227.8L334.0 228.8L335.8 229.1L337.4 228.0L338.6 227.0L339.7 226.1L340.6 224.5L342.2 223.6L343.5 222.8L344.2 222.1L342.8 222.2L341.5 221.0L339.6 221.5L338.7 220.4L336.7 220.5L334.9 220.1L333.9 220.8L332.7 221.3L333.4 223.1L333.0 224.1L331.3 224.8ZM342.8 218.4L344.6 219.2L346.2 220.0L347.8 220.9L349.6 220.5L351.1 220.3L352.3 219.5L353.7 219.7L355.7 219.6L357.1 219.2L357.1 218.0L358.4 217.4L356.3 217.4L355.1 216.3L354.1 215.7L352.3 215.5L350.5 214.9L349.5 215.6L348.3 216.0L347.2 216.3L345.9 215.5L344.2 215.2L343.6 216.2L342.2 216.5ZM363.2 224.3L365.9 227.3L369.3 227.8L370.6 225.1L368.6 222.3L365.2 222.1ZM372.0 226.3L376.7 226.8L379.1 224.3L378.1 222.1L373.4 221.5L371.6 223.8ZM366.6 234.0L370.0 234.9L372.0 234.0L370.6 232.1L367.9 232.1ZM383.5 241.7L384.8 241.4L386.2 241.1L387.6 241.8L388.3 242.8L390.2 243.3L391.7 244.5L392.3 246.0L390.9 245.5L389.0 245.6L387.2 246.1L385.6 246.6L384.3 246.5L383.3 245.6L384.3 245.2L385.2 244.5L384.6 243.2ZM391.7 223.8L394.4 225.1L397.8 223.8L395.1 222.6ZM376.7 219.7L378.2 220.0L379.1 220.5L380.8 220.5L382.5 219.7L384.7 220.2L386.2 220.5L388.1 220.8L390.0 220.6L391.7 220.5L392.3 219.4L393.7 219.2L391.8 218.4L391.0 217.1L389.2 217.9L387.7 217.9L386.2 217.4L384.4 217.0L383.2 215.7L380.8 215.5L379.2 216.3L378.4 215.6L376.7 215.7L375.0 214.4L373.5 215.4L372.0 214.4L372.3 216.1L371.3 217.9L372.4 218.0L373.7 218.0L375.4 217.6L376.6 218.6ZM360.5 218.9L365.9 219.2L368.6 217.9L368.6 215.2L363.9 214.6L360.5 216.5ZM370.9 218.1L374.4 220.0L375.0 217.9L372.7 217.4ZM380.8 215.5L383.0 215.4L384.2 216.2L386.2 215.7L388.0 216.4L390.0 215.2L391.2 215.5L393.0 216.0L394.4 214.9L395.7 214.1L394.3 214.0L393.7 213.0L395.5 212.9L397.1 212.3L398.4 211.3L399.4 211.0L399.8 209.6L398.9 208.7L398.4 207.6L400.4 206.5L401.6 207.1L403.5 206.6L405.2 206.1L405.8 205.0L407.2 204.6L408.6 203.7L410.2 203.0L411.8 201.6L413.4 201.5L414.1 200.2L416.1 200.4L417.4 199.0L417.0 198.0L416.8 197.1L414.9 196.9L413.0 196.4L410.8 196.8L409.3 195.8L407.7 196.1L405.2 195.8L403.6 195.4L401.9 195.6L399.8 195.4L398.0 195.4L396.3 196.4L394.0 196.5L392.0 195.4L390.3 196.1L389.0 196.9L386.8 196.4L385.3 198.1L383.5 198.0L381.6 198.4L380.1 199.1L378.1 199.6L379.4 200.5L380.6 201.6L382.6 202.2L383.5 203.1L385.3 203.1L386.5 204.0L387.6 204.6L385.7 205.2L384.2 206.4L384.9 207.2L386.2 208.1L385.1 209.7L384.0 209.9L382.2 210.4L383.4 211.6L384.9 211.9L383.5 213.0L381.6 213.2L380.1 213.0L380.9 214.5ZM371.3 206.1L372.8 206.7L374.0 208.1L375.8 209.1L377.4 210.2L378.9 209.3L380.4 209.1L382.2 209.6L381.8 208.3L382.9 206.7L381.7 205.6L380.7 205.2L380.1 203.7L378.3 202.5L377.1 202.0L375.4 201.2L373.7 201.1L372.0 202.8L371.1 204.1ZM360.5 210.4L362.2 210.7L363.9 211.3L365.9 211.6L367.4 211.5L369.0 211.0L370.6 211.3L369.9 210.1L370.0 208.7L368.7 208.9L367.1 208.4L365.9 208.1L364.2 208.2L362.1 207.4L360.5 207.3L359.5 207.9L358.4 208.7L359.1 209.8ZM334.7 216.0L340.1 216.8L343.5 214.6L340.1 213.0L336.1 214.1ZM346.9 213.0L352.3 212.4L351.0 210.7L346.9 211.0ZM421.1 275.4L422.1 275.8L423.5 275.4L424.7 276.1L426.2 276.6L427.0 277.1L428.3 276.9L429.6 276.9L430.0 275.4L429.0 273.9L428.3 272.4L427.3 271.6L426.2 271.5L425.6 271.0L426.3 269.8L426.2 268.8L424.5 269.3L423.5 270.5L423.3 271.6L422.6 272.6L421.8 273.1L421.2 274.1ZM414.2 271.7L416.8 272.9L417.7 272.7L416.1 271.7ZM414.3 276.8L416.1 277.8L417.4 277.4L415.4 276.9ZM327.5 270.2L329.1 271.1L330.6 272.4L331.3 273.1L332.4 273.8L334.2 274.1L333.9 272.7L332.9 271.9L331.7 271.0L330.2 270.8L328.9 269.8ZM321.2 264.2L322.8 266.1L323.9 267.7L322.8 265.6L322.9 264.3ZM292.0 257.9L294.0 258.8L295.1 257.5L294.0 256.4ZM320.2 260.1L321.8 262.5L322.5 261.4L321.4 259.9ZM317.1 257.3L318.7 259.9L319.1 258.1L318.0 256.5ZM268.7 246.0L271.3 246.8L272.6 246.4L270.6 245.6ZM274.6 252.7L276.7 253.4L276.7 252.3ZM386.4 314.0L388.3 313.5L389.2 312.8L390.6 312.6L391.7 312.3L392.5 313.0L393.7 313.0L394.7 313.5L395.7 313.5L396.5 314.2L397.8 314.8L399.5 315.6L400.9 316.3L399.8 316.7L398.2 317.1L396.4 316.7L396.8 315.7L395.1 315.2L394.2 314.5L393.0 314.1L391.9 313.8L390.6 313.5L389.2 313.3L387.9 313.8ZM400.6 318.7L401.7 318.8L402.8 319.0L404.5 319.7L405.9 318.9L407.1 319.3L408.3 319.0L408.7 318.3L407.8 317.8L406.9 317.4L405.6 317.3L404.5 316.7L403.4 316.6L402.5 316.7L402.0 317.1L403.2 318.2L402.1 318.8ZM395.3 318.9L397.1 319.6L398.2 319.3L397.1 318.6ZM410.4 318.7L410.5 319.3L412.3 319.3L412.4 318.7ZM395.3 309.6L396.0 311.0L396.1 309.9ZM394.6 307.3L396.0 307.5L396.8 307.8L395.9 307.1ZM398.0 309.4L399.1 310.6L399.5 310.5ZM417.7 329.1L418.8 329.9L418.8 328.9ZM290.0 316.3L290.6 317.8L291.5 317.2L290.9 316.3ZM289.0 315.3L290.0 315.6L289.7 315.2ZM287.0 314.5L287.7 314.8L287.4 314.2ZM284.9 313.8L285.5 314.0L285.4 313.5ZM396.5 331.7L397.4 332.7L398.0 331.7L398.4 330.8L399.1 329.2L400.1 328.5L401.1 328.4L402.1 328.3L403.6 327.4L404.8 326.8L404.3 327.9L405.0 328.8L404.4 330.0L405.2 330.9L405.7 329.4L406.3 328.1L406.6 327.1L408.2 328.1L409.0 329.2L410.2 329.0L411.7 329.2L413.0 329.2L414.0 329.7L415.2 329.7L416.1 329.1L417.4 329.2L416.6 329.9L417.7 329.9L418.8 330.7L419.1 331.9L420.4 332.3L421.5 332.8L422.2 334.0L423.3 334.7L423.9 335.4L425.4 335.4L426.6 335.4L428.3 335.7L429.8 336.6L431.4 337.7L432.2 339.3L432.7 340.1L433.7 340.8L433.7 342.1L432.3 343.2L433.3 343.6L434.5 343.2L435.3 343.5L435.9 344.8L436.7 344.1L437.8 344.1L438.9 344.8L440.5 345.2L441.4 346.6L442.8 346.4L444.1 346.9L445.2 347.0L446.2 347.2L447.3 346.9L448.3 347.3L449.3 348.1L450.3 348.4L451.1 349.5L452.2 349.5L453.5 350.0L454.2 351.8L454.3 353.5L453.8 355.3L452.9 356.0L452.1 357.1L451.7 358.0L450.6 358.5L450.3 359.5L449.3 360.4L448.9 361.3L448.6 362.4L448.8 363.6L448.6 365.1L448.2 367.0L447.7 368.2L447.5 369.3L446.5 370.2L446.2 371.2L445.9 372.6L444.5 374.0L443.5 374.2L442.5 374.0L440.9 374.4L440.0 375.0L438.7 375.4L437.5 376.2L436.5 376.8L435.6 378.4L435.7 379.6L435.6 380.7L434.6 382.4L433.9 383.1L433.3 384.4L432.9 385.6L432.1 386.0L430.7 387.2L429.6 388.1L429.1 389.4L428.3 390.4L426.9 391.0L425.3 391.0L424.1 390.3L423.1 390.3L422.3 389.7L423.1 391.1L423.9 391.9L424.2 393.4L423.4 394.6L423.3 395.7L422.4 395.9L421.5 396.7L420.0 397.0L418.1 397.2L417.2 398.4L417.0 400.0L416.1 400.0L415.0 400.5L413.4 400.0L413.4 401.9L415.1 402.7L414.0 403.1L413.4 403.8L413.4 405.0L412.7 406.4L411.5 407.0L410.6 407.5L410.0 409.1L410.9 410.1L412.0 410.3L411.3 412.0L410.3 412.9L409.6 414.2L408.5 415.2L407.9 416.4L408.4 417.8L408.7 419.0L407.3 419.0L406.5 420.0L405.2 420.3L404.5 421.7L403.6 421.4L402.5 421.0L401.8 419.9L401.2 419.4L400.4 418.7L399.8 417.6L399.6 416.3L399.1 415.0L399.0 413.8L399.1 412.5L399.7 411.1L400.5 410.0L399.1 409.1L399.9 407.6L401.2 406.7L401.6 405.4L402.5 404.3L402.5 403.0L402.5 401.9L401.4 400.3L401.4 399.3L401.7 398.0L402.1 396.7L401.8 394.9L402.7 393.9L402.9 392.4L403.5 390.6L404.3 388.9L404.3 387.4L404.5 386.0L404.3 384.5L404.5 383.1L404.7 381.7L405.2 380.3L405.6 379.0L405.9 377.5L406.4 375.9L406.0 374.7L406.2 372.7L406.3 371.2L405.9 369.6L406.0 367.7L404.7 366.4L403.8 365.7L402.5 365.2L401.3 364.6L399.8 363.7L399.0 362.7L398.0 361.7L398.0 360.7L397.5 359.9L396.8 359.0L396.6 357.6L395.7 356.8L395.4 355.7L394.6 354.4L393.9 353.6L393.3 352.7L392.4 352.0L391.8 351.1L391.5 350.2L391.3 349.1L392.6 347.7L393.0 346.5L391.8 346.1L392.3 344.4L393.0 342.8L394.4 341.5L395.1 340.0L396.4 338.6L396.7 336.6L396.4 334.8L395.9 333.7L396.1 332.6ZM406.0 419.7L407.3 419.7L408.5 419.7L409.0 421.2L409.7 422.6L411.3 423.0L413.1 423.3L411.3 424.1L409.9 424.2L408.6 424.4L407.6 424.9L406.6 424.4L405.5 423.6L404.5 423.3L405.4 422.1L406.2 421.2ZM400.9 401.9L401.8 401.9L401.7 404.1L400.7 403.9ZM399.4 413.3L400.5 413.3L400.2 415.9L399.3 415.5ZM418.5 418.0L420.1 417.3L420.8 418.5L419.2 418.9ZM421.1 417.5L422.9 417.5L423.1 418.2L421.5 418.9ZM450.0 422.1L452.0 422.4L453.0 423.5L451.1 422.8ZM432.6 343.7L434.4 343.5L435.7 344.0L434.6 345.3L432.9 345.3ZM377.4 343.6L378.2 344.0L378.0 344.5L377.4 344.3Z"/>
<path fill="#fff" d="M544.5 344.3L545.6 342.8L547.3 342.7L548.0 343.6L547.6 344.9L546.7 346.2L545.3 346.6L544.5 345.6ZM541.2 347.7L541.8 349.1L541.6 350.8L542.9 352.4L543.7 354.5L542.9 354.3L541.6 352.4L541.0 350.4L541.0 348.7ZM547.5 355.9L548.4 357.1L548.7 359.0L549.2 361.1L549.0 362.1L548.3 361.1L547.9 359.0L547.6 357.1ZM550.3 337.4L550.7 338.2L551.1 339.8L550.5 339.4L550.2 338.2ZM542.7 341.8L543.9 340.3L544.1 340.7L543.3 341.8ZM520.5 325.7L521.3 325.5L521.6 326.3L520.8 326.4ZM538.1 366.8L540.1 365.5L540.6 365.2L538.5 366.4ZM501.1 332.9L501.8 334.0L501.6 334.6L501.2 334.0ZM551.7 327.6L552.4 327.6L552.4 327.0L551.8 327.1ZM541.0 285.8L539.5 284.7L538.9 283.6L540.1 282.3L540.4 280.5L541.8 279.4L542.5 278.2L543.3 277.3L544.8 276.9L545.3 277.9L547.1 277.9L545.7 279.1L546.8 280.4L547.9 280.7L549.4 279.7L551.0 279.6L551.1 279.1L549.6 279.1L549.0 277.9L549.5 277.3L551.4 276.9L552.5 276.3L554.8 276.1L553.7 276.9L553.0 278.1L552.8 279.2L551.5 279.1L551.5 279.6L552.2 280.2L553.7 280.8L555.3 282.0L557.1 282.9L557.9 284.5L557.8 285.3L556.0 286.1L555.3 286.1L553.6 286.2L552.4 285.9L550.7 285.6L549.2 284.5L546.9 284.5L545.3 285.0L544.1 285.6L542.6 285.8ZM565.9 282.9L565.0 280.4L566.0 278.7L567.9 277.6L570.7 276.6L573.5 277.1L573.6 279.1L572.3 279.2L570.9 279.7L570.5 280.4L569.7 280.4L570.7 281.5L570.9 282.6L572.4 283.4L572.8 284.8L573.2 286.1L575.1 285.3L575.4 286.4L573.4 287.6L574.0 288.6L574.6 290.7L574.6 292.4L572.0 292.8L569.7 291.8L567.9 291.3L567.8 290.1L568.4 288.7L568.8 287.3L569.8 287.2L568.6 286.6L568.1 285.5L567.0 284.5ZM580.6 279.7L580.6 281.7L582.2 282.1L583.5 281.7L584.5 280.5L584.9 278.7L585.3 277.3L583.9 276.8L582.6 277.8L581.5 278.1ZM601.2 278.9L602.5 277.3L605.2 276.9L608.6 276.9L607.9 277.6L604.6 277.8L602.5 278.7L601.8 279.9ZM642.1 268.8L643.9 268.6L646.6 266.7L649.0 264.9L650.4 262.5L650.0 261.1L648.6 262.9L646.9 265.1L644.6 267.0ZM542.6 252.9L544.2 253.1L545.8 251.9L545.3 250.9L543.4 250.1L542.5 251.1ZM548.4 251.1L550.0 250.9L550.3 249.7L549.0 248.2L548.6 249.5ZM518.3 255.8L519.8 255.8L520.5 254.6L519.4 254.4ZM520.8 257.3L521.3 257.3L521.7 255.8L521.2 255.8ZM604.8 283.9L606.6 284.4L607.8 283.7L606.2 283.3ZM636.7 292.5L637.8 292.8L638.0 292.1L637.0 291.9ZM559.0 290.0L560.4 290.1L560.5 289.3L559.3 289.3ZM562.7 291.8L563.5 291.8L563.3 290.4L562.7 290.6ZM680.5 280.4L681.6 280.4L681.4 279.4L680.6 279.4ZM642.1 325.7L643.2 326.5L642.8 326.8L641.8 326.0ZM376.6 276.9L378.8 277.3L381.5 276.9L383.1 277.4L386.2 277.3L386.9 276.6L386.2 274.9L384.5 273.4L381.8 273.2L380.1 274.6L378.8 275.4ZM382.3 284.8L383.8 285.1L384.7 282.9L384.7 280.8L386.5 278.4L385.2 278.1L383.3 278.7L382.0 280.2L382.3 282.1ZM386.8 277.9L388.3 278.1L389.6 278.9L391.3 278.9L393.3 280.2L391.9 278.1L390.7 277.9L391.0 279.9L391.0 282.1L389.8 283.1L388.8 281.7L387.7 281.8L388.3 280.0L387.2 278.9ZM388.3 285.1L390.3 285.6L392.3 284.7L394.5 283.6L394.0 282.9L391.3 283.4L389.2 284.4ZM393.3 282.6L395.1 282.6L397.6 282.5L398.3 281.0L396.0 281.3L394.0 281.7ZM367.4 264.9L368.9 267.5L370.2 270.7L370.9 269.6L369.7 267.0L368.9 264.5ZM364.5 266.5L366.6 268.8L367.9 270.7L366.7 268.2L365.5 266.1ZM332.0 240.2L334.7 242.4L337.4 242.8L340.1 241.7L341.5 240.0L339.5 238.5L336.7 238.7L334.7 239.8L332.7 238.5ZM342.8 251.1L344.9 251.5L346.9 250.7L349.6 249.1L353.0 247.6L351.0 247.2L348.3 248.5L344.9 248.0L343.5 249.9ZM350.6 255.6L353.7 255.0L357.1 254.4L353.7 254.0ZM361.8 259.8L363.9 258.8L363.2 256.9L361.8 257.9ZM385.0 327.5L386.4 328.5L386.0 327.5ZM406.6 363.5L407.5 363.9L408.2 365.0L407.3 364.5ZM404.0 329.1L405.0 329.3L405.1 330.7L403.9 330.8Z"/>
<path fill="none" stroke="#a29f9a" stroke-width="0.65" d="M498.5 295.1L499.2 296.7L499.7 298.9L497.4 300.0L496.6 301.3L494.7 302.6L492.7 303.1L489.7 304.4L489.7 305.8M483.6 305.8L489.7 305.8L489.7 308.2L485.2 308.2L485.2 311.9L483.9 312.4L483.9 314.8L478.4 314.8M489.7 306.4L495.0 309.6M495.0 309.6L492.7 309.6L494.0 322.7L488.6 322.8L485.9 322.5L485.0 323.6M485.0 323.6L483.2 321.9L481.8 321.2L479.1 322.0M495.0 309.6L503.1 315.1L503.1 315.6L505.8 316.8L506.0 317.9L507.2 317.8M507.2 317.8L509.6 316.8L511.7 315.3L517.8 311.7M517.8 311.7L515.1 310.3L514.4 307.8L515.1 306.8L514.7 304.7L514.4 302.3M514.4 302.3L513.7 299.5L511.8 297.8L512.8 295.8L512.8 293.7L513.3 292.2M514.4 302.3L515.5 300.0L517.1 298.8L517.1 297.9M535.4 300.2L535.4 313.8M535.4 313.8L551.5 313.8M535.4 313.8L535.4 316.6L534.0 316.6L534.0 317.2M534.0 317.2L523.2 311.7L521.8 312.4L520.8 313.0L517.8 311.7M521.8 312.4L523.1 316.0L522.5 320.8L519.9 325.1M519.9 325.1L518.5 325.9L515.1 325.6L512.1 325.6L510.3 325.2L507.1 325.3L506.4 327.8M507.2 317.8L507.2 321.3L506.2 322.8L502.9 323.3L501.8 323.3M501.8 323.3L502.9 325.3L504.5 326.7L504.8 327.5L506.4 327.8M501.8 323.3L498.8 324.4L496.8 325.6L495.4 326.7L494.0 329.3M485.0 323.6L486.0 326.8L488.9 327.0L490.2 328.7L490.7 329.7L493.1 329.3L494.0 329.3M478.9 326.8L482.9 326.4L486.0 326.8M482.9 326.4L482.9 327.8L481.2 328.7M478.7 325.2L481.2 324.9L482.8 325.5L480.5 325.7L478.7 325.9M483.5 331.3L484.6 330.3L486.6 330.0L487.5 332.0L485.9 334.1M487.5 332.0L488.8 333.5L490.0 333.2L490.2 334.8L491.3 337.4M490.0 333.2L490.7 332.0L490.7 329.7M497.3 336.5L497.8 332.8L497.7 330.7M494.0 329.3L495.4 330.4L497.7 330.7L497.6 328.8L501.5 328.5M501.5 328.5L502.2 330.7L502.3 333.3L503.1 335.2M502.7 328.7L503.7 331.3L503.7 335.0M501.5 328.5L502.7 328.7L504.8 327.5M506.4 327.8L505.3 331.3L505.2 334.8M513.0 337.1L514.4 334.8L517.1 334.5L518.5 332.0L520.1 328.7L521.2 327.0L520.6 326.0M520.6 326.0L521.8 328.0L522.5 330.0L520.5 330.7L522.5 333.3M522.5 333.3L521.2 336.0L521.8 337.9L523.3 340.3M523.3 340.3L519.5 340.3L516.8 340.3L514.8 340.2M516.8 340.3L516.8 341.9L514.8 341.9M534.0 317.2L534.0 322.4L532.0 324.7L531.7 326.4L532.6 328.7M532.6 328.7L530.0 330.7L527.3 331.3L525.9 332.7L522.5 333.3M532.6 328.7L533.6 331.3L535.8 333.3L538.7 336.5M533.6 331.6L535.4 329.6L539.5 330.8L542.2 330.0L544.9 327.4L546.5 327.1L546.5 329.1L547.6 330.7M538.7 336.5L535.4 336.6L532.0 337.8L528.6 337.0L526.7 338.6M526.7 338.6L523.9 338.9L523.3 340.3M526.7 338.6L525.9 341.9L525.5 343.9L523.5 346.1L523.2 348.2L522.1 349.0L521.0 349.6L519.5 349.5L518.0 350.8M519.5 340.3L521.0 341.5L521.0 343.9L521.0 345.8L518.5 346.2L517.1 347.8L516.7 348.3M518.2 351.1L519.8 351.0L523.9 351.0L524.6 352.8L527.9 353.1L527.9 353.7L531.1 352.8L531.2 355.7L531.6 358.0L534.0 358.1L534.0 360.4M534.0 360.4L531.3 360.4L531.3 364.7L533.2 366.6M517.5 366.2L520.5 366.3L526.6 366.3L530.0 367.1L533.2 366.6L535.8 366.8M535.8 366.8L533.4 367.8L530.0 367.5L530.0 372.6L528.6 372.6L528.6 376.5L528.6 381.6L525.2 382.0L523.9 381.8M528.6 376.5L529.7 379.3L532.3 377.5L535.0 377.9L538.0 374.9L541.4 372.9M541.4 372.9L538.8 370.5L535.8 366.8M535.8 366.8L538.1 367.0L540.7 364.4L542.7 363.9M542.7 363.9L546.2 361.7M542.7 363.9L544.2 364.7L546.2 365.4L546.0 367.8L545.6 371.6L543.9 373.1M541.4 372.9L543.9 373.1L544.9 376.1L544.8 378.0L546.1 379.4M538.1 383.3L539.7 382.0L541.4 383.0L540.3 384.6L538.7 384.3L538.1 383.3M543.5 378.2L544.9 378.2L545.0 379.6L543.5 379.8L543.5 378.2M534.0 358.1L536.1 358.6L538.4 359.0L540.8 360.9L541.9 359.3L540.0 359.0L540.1 355.3L543.3 354.0M543.3 354.0L546.1 355.6L547.6 355.7M546.1 355.6L546.7 358.4L545.8 361.2L546.2 361.7M546.2 361.7L548.3 362.5L550.0 364.4L549.4 365.9L548.1 364.8L548.4 363.5M548.8 358.5L552.4 358.6L556.3 357.1M541.1 347.5L541.1 345.2L541.8 343.9L541.8 342.1L543.5 340.3L543.3 338.6M541.1 345.2L543.3 344.5L543.3 346.4L541.1 346.8M543.3 346.4L542.9 347.8L541.9 349.0L541.2 349.0M547.6 344.5L547.6 342.8L549.0 341.2L548.3 338.6L547.6 337.7M543.3 344.5L547.6 344.5L552.5 347.1L554.7 349.4M543.3 338.6L545.6 338.2L547.6 337.7L550.2 337.1L550.3 337.4L553.0 338.5L555.1 338.7L557.1 338.1L558.3 338.1M558.3 338.1L557.1 339.5L557.1 344.3L557.9 345.3M558.3 338.1L559.8 337.1L562.5 336.6L566.6 332.7L565.2 332.7L561.2 331.3L559.8 328.7L559.5 328.7L558.2 328.7L559.0 326.7L559.9 326.4M559.0 326.7L555.7 324.0L553.7 324.1L551.0 324.3L551.7 320.6L553.8 319.3M551.0 324.3L550.5 326.4L549.0 328.7L547.6 330.7L546.2 332.7L548.3 334.4L550.2 337.1M538.7 336.5L540.8 337.4L543.3 338.6M518.0 350.8L518.9 349.1L518.0 349.8M568.2 277.6L567.3 275.6L565.2 274.8L564.6 273.9L565.2 272.6L565.1 270.9L567.5 270.3L570.4 268.6L573.4 268.8L576.1 270.2L578.8 269.6L581.0 269.6L584.9 270.0L582.9 268.2L584.2 266.1L584.2 264.3L589.6 263.6L595.1 262.0L597.8 264.0L601.2 264.3L605.6 263.6L610.0 270.0L614.7 269.6L617.4 272.1L619.9 272.7M619.9 272.7L623.1 271.7L626.3 270.2L629.6 271.4L633.4 271.7L634.8 270.5L635.7 267.9L640.1 269.1L641.2 270.9L645.2 270.9L647.9 272.4L651.3 272.7L656.1 271.0L659.7 271.7M659.7 271.7L661.2 272.2L663.1 270.9L664.9 267.0L666.3 265.6L669.1 265.2L672.4 266.5L674.4 271.0L677.8 273.2L678.9 275.3L681.2 275.3L684.6 274.1L684.2 275.6L682.9 277.8L682.0 279.6L680.5 279.4L679.4 281.3L679.1 282.9L678.6 283.9M678.6 283.9L677.5 283.1L675.2 284.5L673.6 284.8L670.2 287.5M673.3 291.0L674.4 290.3L675.6 289.8M620.6 272.7L621.5 274.4L624.2 275.6L624.9 278.1L624.9 279.4L628.3 279.9L630.9 281.0L632.2 283.4L637.1 283.6L642.5 284.8L643.9 285.1L647.3 283.9L650.7 283.6L653.4 281.8L653.1 279.7L655.5 280.0L658.8 278.6L660.2 277.4L663.8 277.1L663.9 276.1L661.2 275.3L658.1 274.9L658.8 273.4L659.7 271.7M619.9 272.7L617.8 274.1L617.4 276.3L614.0 276.1L613.1 278.9L610.3 279.7L611.1 282.6L610.3 284.2M610.3 284.2L608.6 283.3L604.1 282.9L601.8 282.6L601.2 283.7L597.8 283.6L597.6 284.2M597.6 284.2L595.1 285.6L593.7 286.1L591.8 285.8L591.0 283.9L590.7 282.9L589.5 281.8L585.6 282.1L584.2 280.7L580.8 278.9L577.4 279.7L577.4 285.6M577.4 285.6L578.8 285.6L580.8 283.4L582.9 284.2L583.0 285.5L585.4 285.9L586.2 287.6L588.6 289.3L591.7 291.6M577.4 285.6L575.8 284.7L574.7 284.0L572.7 284.8M574.6 291.8L576.1 290.7L579.1 290.3L581.9 291.5L584.5 292.8L584.5 294.3M584.5 294.3L586.9 294.6L589.0 293.3L591.7 291.6L593.4 291.9L595.5 292.1L596.7 291.3L598.5 290.3L598.5 292.5L600.5 291.6L603.1 291.9M593.4 291.9L594.0 289.5L592.9 288.4L594.5 287.6L597.0 287.0L597.6 284.2M595.5 288.4L598.9 288.6L601.4 288.4M597.0 287.0L599.1 287.2L600.8 286.4L598.5 285.6L597.6 284.2M601.4 288.4L601.8 287.5L605.6 286.2L607.5 285.9L610.3 284.2M601.4 288.4L603.1 290.0L603.1 291.9M603.1 291.9L598.7 293.0L598.0 295.7L596.4 297.9L595.5 299.8L591.5 301.3L591.4 302.7L586.2 303.4L584.1 302.8M584.5 294.3L583.7 296.3L583.9 297.5L583.7 299.7L585.3 301.1L584.1 302.8L585.2 304.4L587.2 306.6L587.2 307.4L585.0 309.4M594.0 311.5L596.4 310.8L597.8 310.2L596.4 308.7L595.7 306.8L597.1 305.4L599.4 304.1L601.0 302.6L602.5 301.1L603.6 299.2L601.8 298.2L601.8 295.7L605.6 294.3L607.0 294.5M603.1 291.9L604.6 293.7L607.0 294.5L608.6 296.3L608.2 298.9L609.0 301.1L611.3 302.3M611.3 302.3L613.0 302.6L615.4 304.1L618.1 305.4L621.0 305.6M611.3 302.3L610.1 304.3L611.6 304.8L614.5 306.3L616.8 307.1L621.0 307.7L621.0 305.6L622.0 306.4M622.0 306.4L623.3 305.1L625.7 305.7L626.3 307.0L623.3 307.3L622.0 306.4M625.7 305.7L628.3 304.4L631.0 303.7L633.4 305.1M622.2 314.0L621.9 312.2L621.0 310.3L621.1 308.5L621.5 307.7L623.3 308.2L623.3 309.2L626.7 309.5L626.5 310.6L625.2 311.5L625.6 312.4L626.7 311.5L627.1 314.0L626.7 315.5M627.1 314.0L628.0 312.4L628.2 311.0L629.8 309.2L630.6 307.5L631.9 306.4L633.4 305.1M633.4 305.1L635.3 306.0L635.3 308.5L633.8 310.5L635.6 312.2L636.3 313.8L638.7 314.9M638.7 314.9L637.2 316.0M637.2 316.0L635.1 317.0L634.0 318.9L635.2 321.3L634.7 323.1L636.0 326.0L636.6 327.9L635.3 329.7M637.2 316.0L637.8 317.2L638.9 317.2L638.5 319.7L639.9 319.1L641.6 318.7L643.5 320.0L643.6 321.6L644.7 322.9L644.2 324.3M644.2 324.3L641.2 324.3L640.5 325.3L641.0 327.8M644.2 324.3L645.2 324.8L647.3 323.7M647.3 323.7L647.3 326.7L645.2 327.9L645.1 328.7L643.2 329.5M647.3 323.7L647.1 321.7L644.6 318.6L642.5 317.2L643.7 316.0L641.2 315.3L640.1 313.3M638.7 314.9L639.5 314.9L640.1 313.3M640.1 313.3L642.4 313.0L644.4 312.2L646.2 312.7L646.2 313.8L647.9 314.5M637.2 334.8L638.6 335.7L639.5 335.6L639.9 335.0M650.1 340.6L650.7 341.9L653.1 341.9L654.7 341.4L656.9 341.2L658.5 339.5L658.3 337.7L661.0 337.7M656.2 337.1L657.2 337.9L657.8 336.8M692.7 346.6L692.7 355.2M670.9 355.1L671.1 355.7M550.2 295.8L551.0 296.0L550.7 297.0L549.9 297.8L549.1 298.0M549.9 297.8L549.8 298.6L549.6 300.4L549.0 303.3M549.9 298.6L551.4 299.2L554.1 297.6L557.1 296.1L557.4 293.7L559.0 292.1M554.1 297.6L554.7 299.4M554.7 299.4L551.7 300.4L553.0 301.8L552.4 302.6L550.3 303.7L549.0 303.4M554.7 299.4L556.3 299.8L558.5 301.0L562.1 303.7L564.7 303.8L565.9 304.6L567.1 304.7M564.7 303.8L566.2 302.4L566.6 302.7M562.2 291.9L563.1 293.7L564.1 294.9L563.3 296.4L564.0 298.0L566.3 299.7L566.2 301.1L567.4 302.7M571.5 310.8L572.8 312.6L576.4 312.8L577.0 311.0L577.4 309.8L578.0 309.8M576.4 312.8L577.0 313.8L576.1 316.6L572.0 317.9M572.0 317.9L567.9 318.5L565.2 320.6L562.5 320.1L560.5 320.1L559.5 321.4M572.0 317.9L573.5 321.0M570.4 310.1L571.1 310.3M489.6 284.7L490.4 284.4L492.7 284.7L493.1 285.1L492.1 286.1L492.1 287.3L492.0 288.1L491.3 288.3L492.0 289.2L491.6 290.1L492.0 290.7L491.3 291.5L491.5 291.9M499.1 282.3L499.6 282.9L500.8 283.3L502.4 283.3L503.8 283.7L505.7 283.9M504.9 269.5L505.8 270.2L507.2 271.4L508.0 271.2L509.4 272.2L510.2 272.2M506.1 268.9L507.3 268.9L508.3 268.8L509.5 269.6L509.8 270.0M509.8 270.0L509.6 268.2L510.7 267.9L511.0 266.8L511.3 265.6M509.8 270.0L510.0 270.9L509.8 271.2L510.3 271.7L510.2 272.2M509.4 272.2L509.4 271.2L509.8 271.2M510.2 272.2L511.7 272.9L512.6 273.1L511.8 274.8L511.8 275.4M511.8 275.4L511.0 275.8L509.8 277.4L509.9 277.8L510.7 277.4L511.0 278.2M511.0 278.2L511.0 279.4L510.6 279.7L511.0 281.0L511.9 281.2L511.7 281.7M511.8 275.4L513.2 275.3L514.5 275.6M514.5 275.6L514.5 276.3L515.6 276.6M511.0 278.2L512.2 278.2L512.9 277.4L513.7 278.2L514.1 277.4L515.2 277.6L515.6 276.6M515.6 276.6L516.4 276.8L518.0 276.4L518.3 276.9L520.1 277.3M520.1 277.3L519.9 278.1L520.1 278.6M514.5 275.6L515.7 275.6L516.4 275.8L517.8 275.4L519.1 275.6L518.9 274.6L520.2 273.4M520.2 273.4L518.5 272.2L517.9 270.9L519.1 270.5L520.9 269.6L521.6 269.8M521.6 269.8L521.8 268.8L521.3 267.0L520.6 266.1L520.8 264.5M513.2 262.7L514.5 262.7M521.6 269.8L523.5 270.3L524.1 271.0L525.5 270.9L527.0 272.2M520.2 273.4L521.8 273.1L524.4 273.8M524.4 273.8L525.9 272.9L527.0 272.2M527.0 272.2L528.6 272.7L530.7 272.4L532.0 272.9M524.4 273.8L524.7 274.8L523.9 275.6L523.3 276.6M523.3 276.6L521.8 277.1L520.1 277.3M524.7 274.8L527.0 275.1L528.6 274.4L530.7 273.9L531.6 274.1M531.6 274.1L532.0 272.9M532.0 272.9L532.7 271.4L534.0 270.3L533.5 268.8M533.5 268.8L533.4 267.0L533.9 266.1L533.4 264.5M533.4 264.5L532.4 263.6L528.3 263.6M532.4 263.6L532.4 262.5L530.4 262.0M533.4 264.5L536.1 264.0L537.8 262.0L537.6 261.2M530.0 260.5L532.4 259.9L535.4 260.1L537.6 261.2M537.6 261.2L539.7 260.5L539.1 258.3L538.7 257.9M534.6 257.1L536.1 256.9L538.7 257.9M538.7 257.9L538.8 256.4L538.7 255.0L539.6 254.2M539.7 260.5L543.3 261.4L543.5 263.1L545.8 265.4L544.2 266.0L544.6 267.7M533.5 268.8L535.4 268.1L538.8 268.6L541.2 268.9L542.9 269.1L544.6 267.7M544.6 267.7L547.6 267.4L549.6 269.6L552.4 270.9L555.7 272.1L555.5 273.9L555.5 274.9L553.4 276.1M531.6 274.1L532.6 274.8L534.7 274.9L537.6 274.3M537.6 274.3L539.7 274.4L541.1 274.9L542.2 277.4L540.7 278.2L539.7 278.9L541.8 279.4M537.6 274.3L538.8 275.6L539.6 277.3L539.7 278.9M532.6 274.8L530.7 276.9L529.0 277.9M529.0 277.9L527.1 278.2L525.2 278.2L524.0 277.3L523.3 276.6M524.0 277.3L522.7 277.8L522.2 278.9L521.0 278.9L519.9 278.9M522.9 279.4L524.4 279.4L527.1 279.7L527.3 279.9M522.9 279.4L523.2 281.0L525.0 282.5L526.6 283.7M527.1 278.2L527.3 279.9L527.8 281.0L527.5 282.1L526.9 282.6L526.6 283.7M529.0 277.9L530.5 279.4L530.7 280.0L532.0 280.5L532.3 281.0M532.3 281.0L531.9 282.1L532.7 282.9L531.9 284.0M532.3 281.0L533.4 281.7L536.1 281.8L538.1 281.2L540.3 281.8M532.7 285.6L534.7 285.3L536.8 285.6L537.3 285.0M537.3 285.0L538.8 284.5L539.5 284.5M537.3 285.0L537.6 285.6L536.8 286.4M531.9 284.0L530.7 284.0L529.4 284.7M529.8 286.2L531.3 285.9L532.7 285.6L531.9 284.0M528.6 288.1L529.6 287.2L529.8 286.2L529.4 284.7M527.8 284.7L528.3 283.7L529.4 284.7M527.5 282.1L529.0 283.3L528.3 283.7M529.0 283.3L530.7 282.6L530.7 284.0M516.6 255.0L517.5 253.4L518.2 251.1L518.0 249.7L518.0 247.0L520.5 243.9L521.2 240.4L523.2 237.4L525.9 235.3L528.6 234.0L529.4 233.7M529.4 233.7L533.4 236.5L533.6 239.6L534.3 241.1M529.4 233.7L530.7 233.3L536.3 234.0L536.8 232.3L539.5 231.6L540.8 233.7L540.7 234.0L543.3 232.1M540.7 234.0L540.1 235.8L542.2 236.9L540.8 238.7L542.2 241.3L541.8 243.2L542.9 244.5L542.2 245.6L544.2 247.2L541.5 250.1L539.2 252.1M491.6 262.5L490.7 263.4L491.6 264.2L493.0 264.2M555.7 282.3L559.1 282.6L561.2 283.6L563.2 283.7L564.6 284.8L566.3 285.8L567.4 284.8M557.8 285.3L559.1 285.3L560.5 285.9L562.5 285.8L564.4 284.7M560.5 285.9L560.8 287.5L562.2 288.1L561.2 288.6L561.7 290.3L562.2 291.9L559.0 292.1L555.7 292.5L553.0 292.5L551.1 293.3L550.2 293.9M562.5 285.8L563.2 286.7L564.6 288.4L564.6 289.3M562.2 288.1L564.6 289.3L566.6 288.1L567.8 290.1M310.3 232.6L310.3 252.5L313.0 252.7L315.0 255.0L316.4 254.0L318.4 254.2L320.5 256.0L322.5 258.6L325.1 260.5L325.1 262.0M334.4 273.1L372.4 273.1L373.2 273.6L376.1 274.1L378.8 274.6L380.1 274.8M386.8 277.3L388.3 278.1L389.6 279.2L390.2 282.0L389.6 283.6L388.8 284.4L390.3 284.8L394.4 283.4L394.2 282.3L396.4 282.0L397.9 281.2L400.1 279.7L404.5 279.7L405.5 279.1L406.6 276.9L407.7 275.8L408.9 275.9L409.6 276.4L409.6 278.6L410.4 280.0M342.7 298.9L346.0 298.6L351.0 300.7L354.8 300.7L354.8 300.0L357.1 300.0L359.8 303.1L361.6 304.0L362.6 302.8L364.5 303.4L366.6 306.1L368.2 308.1L369.7 308.4M376.3 323.9L376.5 322.9L377.2 321.9L378.8 321.9L377.6 320.4L378.1 319.6L380.5 319.6L380.5 322.0L381.0 322.1M380.5 319.6L381.2 319.3L381.8 318.7M381.9 322.4L380.4 324.0L379.3 324.9M380.4 324.1L381.5 324.8L382.4 325.5M383.1 326.0L383.9 324.9L385.6 324.7L386.5 323.6L388.7 323.3M385.3 328.5L386.6 328.7L388.0 328.8M389.1 332.5L389.1 331.3L389.5 330.5M404.3 317.0L404.1 319.3M396.5 331.7L396.4 332.9L395.9 333.7M404.8 326.8L403.5 328.4L402.5 330.7L403.3 332.1L403.3 333.5L405.5 333.9L407.4 335.2L410.0 335.0L409.6 337.3L410.2 338.7L409.6 339.5L410.4 340.6L410.8 341.6M410.8 341.6L409.4 340.8L406.9 341.0L407.4 341.8L406.6 342.4L406.6 343.5L407.4 344.5L406.7 348.7M406.7 348.7L405.6 348.2L406.4 346.8L404.1 346.1L402.2 346.2L400.6 344.0L399.4 343.3M399.4 343.3L398.0 342.7L396.4 342.3L394.6 341.4M399.4 343.3L399.1 345.2L397.6 346.6L395.7 347.5L395.1 349.3L393.6 349.0L392.6 347.7M419.1 331.9L420.1 332.7L418.4 334.0L418.6 335.3L418.2 335.4L419.2 336.4M419.2 336.4L416.3 337.9L414.4 337.8L414.7 339.9L415.5 340.3L414.7 340.7L412.7 342.1L410.8 341.6M419.2 336.4L420.1 336.6L420.8 337.9L420.1 339.5L420.5 340.8L421.8 341.6L423.5 341.0L424.9 340.7M423.9 335.4L423.8 336.6L422.9 337.9L423.8 338.9L424.9 340.7M428.3 335.7L427.7 337.3L428.3 338.6L427.5 340.2M424.9 340.7L425.7 339.9L427.5 340.2L429.6 340.3L430.3 339.9L431.4 337.7M406.7 348.7L405.2 349.0L402.5 349.8L401.3 352.8L402.6 355.6L403.6 356.4L405.8 355.7L405.8 357.7L407.1 357.6M407.1 357.6L408.6 357.7L411.2 356.3L412.8 356.1L413.0 358.6L416.1 360.0L417.7 361.1L419.5 361.5L420.0 364.7L422.3 364.8L422.4 366.2L423.3 366.8L423.5 367.4L422.7 369.6L422.6 370.1M407.1 357.6L408.3 359.7L407.9 362.4L407.3 363.6L407.9 365.1L407.3 366.4L406.0 367.7M407.3 366.4L408.5 369.2L408.9 371.9L409.6 373.8L410.5 373.7M410.5 373.7L411.6 372.3L413.1 372.7L414.3 373.7L414.9 372.6L416.5 372.9M416.5 372.9L417.2 370.5L417.7 369.3L421.4 368.9L422.6 370.1M422.6 370.1L423.0 372.7L425.8 373.0L426.4 375.4L427.9 375.5L427.5 377.6M416.5 372.9L418.8 375.1L421.8 376.5L423.4 377.6L422.0 379.8L425.2 380.1L427.5 377.6M427.5 377.6L428.5 378.2L428.7 379.6L425.8 381.6L423.4 384.1M423.4 384.1L425.6 385.0L427.6 386.3L429.4 387.8L429.1 389.4M423.4 384.1L422.6 386.7L422.3 389.7M410.5 373.7L410.2 375.4L408.6 376.5L408.9 379.3L407.3 381.7L406.6 384.6L406.2 387.5L406.9 390.0L405.9 392.7L405.1 395.7L404.3 398.8L404.3 401.9L404.0 405.1L404.5 408.3L403.5 411.6L402.1 414.2L403.5 416.8L404.0 418.5L407.3 418.7L408.7 419.0M408.5 419.7L408.5 423.7"/>
</g></svg>
<div id="tbl">
<span class="ax" style="left:433.9px;top:293.5px">Page Views</span>
<span class="th" style="left:46.9px;top:313px">Country</span>
<span class="th r" style="right:770.8px;top:313px">Page Views</span>
<i class="arr" style="left:323.3px;top:319.2px"></i>
<span class="th r" style="right:570.7px;top:313px">Visits</span>
<span class="th r" style="right:389.4px;top:313px">Unique Visitors</span>
<span class="th r" style="right:192.8px;top:313px">Hits</span>
<span class="th r" style="right:8.4px;top:313px">Bandwidth</span>
<div class="hl" style="top:332px"></div>
<div class="vl" style="left:38px;top:333px"></div>
<div class="vl" style="left:143px;top:333px"></div>
<div class="vl" style="left:339px;top:333px"></div>
<div class="vl" style="left:524px;top:333px"></div>
<div class="vl" style="left:705px;top:333px"></div>
<div class="vl" style="left:902px;top:333px"></div>
<span class="td r" style="right:1057.2px;top:336px">1.</span>
<span class="td" style="left:46.9px;top:336px">N/A</span>
<span class="bd" style="left:288.4px;width:43.2px;top:336.4px">100.00%</span>
<span class="td r" style="right:804.4px;top:336px">42,846</span>
<span class="bd" style="left:472.3px;width:43.6px;top:336.4px">100.00%</span>
<span class="td r" style="right:620.5px;top:336px">5,763</span>
<span class="bd" style="left:653.4px;width:43.6px;top:336.4px">100.00%</span>
<span class="td r" style="right:439.4px;top:336px">1</span>
<span class="bd" style="left:850.2px;width:43.6px;top:336.4px">100.00%</span>
<span class="td r" style="right:242.6px;top:336px">50,617</span>
<span class="bd" style="left:1041.3px;width:37.5px;top:336.4px">0.00%</span>
<span class="td r" style="right:51.5px;top:336px">0.0 MB</span>
<div class="tot" style="top:353px"></div>
<span class="tt" style="left:6.8px;top:357.5px">Total</span>
<span class="tt r" style="right:754.4px;top:357.5px">42,846</span>
<span class="tt r" style="right:570.6px;top:357.5px">5,763</span>
<span class="tt r" style="right:389.2px;top:357.5px">1</span>
<span class="tt r" style="right:192.7px;top:357.5px">50,617</span>
<span class="tt r" style="right:8.3px;top:357.5px">0.0 MB</span>
</div>
  </div>
</div></div>
<div id="taskbar"><div class="act"></div><span class="clk">8:57 AM</span><div class="sep"></div></div>
</body>
</html>
